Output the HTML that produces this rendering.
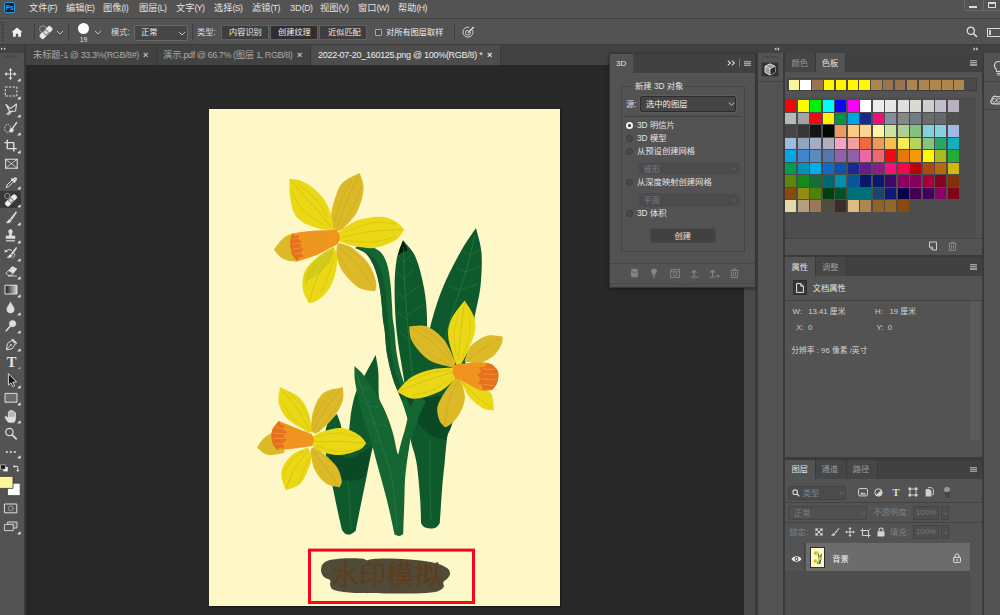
<!DOCTYPE html>
<html lang="zh-CN">
<head>
<meta charset="utf-8">
<title>Photoshop</title>
<style>
*{box-sizing:border-box;margin:0;padding:0}
html,body{width:1000px;height:615px;overflow:hidden;background:#535353}
body{position:relative;font-family:"Liberation Sans","Noto Sans CJK SC",sans-serif;font-size:9.5px;color:#d6d6d6;line-height:1}
.abs{position:absolute}
.t{position:absolute;white-space:nowrap;line-height:12px;height:12px}
/* bars */
#menubar{left:0;top:0;width:1000px;height:19px;background:#535353;border-bottom:1px solid #404040}
#optbar{left:0;top:19px;width:1000px;height:26px;background:#535353;border-bottom:1px solid #3a3a3a}
#tabbar{left:24px;top:45px;width:733px;height:20px;background:#424242}
#toolbar{left:0;top:45px;width:24px;height:570px;background:#535353}
#canvas{left:25px;top:65px;width:733px;height:550px;background:#282828}
#doc{left:209px;top:108.6px;width:351.3px;height:497.9px;background:#fef8c8;box-shadow:1px 1px 1.5px #161616}
.mi{top:1.7px;color:#e2e2e2;font-size:9.2px}
.mi i{font-style:normal;font-size:8.7px;letter-spacing:-0.5px}
.tb{top:49px;font-size:9.2px;color:#a9a9a9}
.tb i{font-style:normal;font-size:9px;letter-spacing:var(--l)}
.tx{font-size:9px;font-weight:bold;color:#c4c4c4}
.sw{width:11.3px;height:11.2px}
.pt{font-size:8.3px;color:#dcdcdc}
.pp{font-size:7.8px;color:#cdcdcd}
.ot{top:27px;font-size:8.2px;color:#dcdcdc}
</style>
</head>
<body>
<!-- canvas -->
<div class="abs" id="canvas"></div>
<div class="abs" style="left:743.7px;top:65px;width:11.5px;height:550px;background:#4a4a4a"></div>
<div class="abs" style="left:755px;top:65px;width:3px;height:550px;background:#3c3c3c"></div>
<div class="abs" id="doc"></div>
<!--ART-->
<svg class="abs" style="left:0;top:0" width="1000" height="615" viewBox="0 0 1000 615">
<path d="M476.0 228.0C473.5 231.8 466.4 241.3 461.0 251.0C455.6 260.7 448.3 274.5 443.5 286.0C438.7 297.5 434.9 309.0 432.0 320.0C429.1 331.0 427.3 338.7 426.0 352.0C424.7 365.3 423.7 385.3 424.0 400.0C424.3 414.7 427.3 433.3 428.0 440.0C431.7 438.3 443.7 443.3 450.0 430.0C456.3 416.7 463.3 371.7 466.0 360.0C467.5 352.5 472.6 327.3 475.0 315.0C477.4 302.7 479.4 296.3 480.5 286.0C481.6 275.7 482.2 262.7 481.5 253.0C480.8 243.3 476.9 232.2 476.0 228.0Z" fill="#0f5a2d"/>
<path d="M403.0 240.5C401.9 243.6 398.1 250.9 396.7 259.0C395.3 267.1 394.6 276.8 394.6 289.0C394.6 301.2 395.2 317.5 396.7 332.0C398.2 346.5 401.2 361.3 403.4 376.0C405.6 390.7 408.9 412.7 410.0 420.0C412.3 416.7 421.3 411.3 424.0 400.0C426.7 388.7 425.7 360.0 426.0 352.0C426.2 346.3 427.3 328.7 427.0 318.0C426.7 307.3 425.9 298.2 424.0 288.0C422.1 277.8 419.0 264.9 415.5 257.0C412.0 249.1 405.1 243.2 403.0 240.5Z" fill="#0f5a2d"/>
<path d="M403.0 240.5C402.4 242.1 400.2 247.6 399.5 250.0C398.8 252.4 398.7 254.2 398.5 255.0C399.2 254.5 401.5 252.8 403.0 252.0C404.5 251.2 406.8 250.8 407.5 250.5C407.2 249.6 406.2 246.7 405.5 245.0C404.8 243.3 403.4 241.2 403.0 240.5Z" fill="#06200f"/>
<path d="M404.0 372.0C404.5 378.3 405.9 398.9 407.0 410.0C408.1 421.1 408.9 429.9 410.5 438.8C412.1 447.7 415.0 453.0 416.6 463.2C418.2 473.4 419.5 489.8 420.2 499.8C420.9 509.8 420.9 519.1 421.0 523.0C421.5 523.7 422.5 526.1 424.0 527.0C425.5 527.9 428.0 528.4 430.0 528.5C432.0 528.6 434.4 528.4 436.0 527.5C437.6 526.6 439.2 523.8 439.8 523.0C440.2 517.1 441.4 497.6 442.2 487.6C443.0 477.6 443.8 471.3 444.6 463.2C445.4 455.1 445.8 447.7 447.0 438.8C448.2 429.9 450.7 417.3 452.0 410.0C453.3 402.7 457.0 401.7 455.0 395.0C453.0 388.3 442.5 374.2 440.0 370.0C436.7 368.3 426.0 359.7 420.0 360.0C414.0 360.3 406.7 370.0 404.0 372.0Z" fill="#0f5a2d"/>
<path d="M375.7 355.1C374.1 358.0 369.5 366.4 366.2 372.5C362.9 378.6 358.4 385.8 356.0 392.0C353.6 398.2 352.5 404.9 351.5 410.0C350.5 415.1 350.5 418.5 349.9 422.8C349.3 427.1 349.1 433.1 348.0 436.0C346.9 438.9 343.8 439.3 343.0 440.0C342.6 437.5 341.8 429.3 340.8 425.0C339.8 420.7 337.5 415.9 336.9 414.1C335.2 415.9 329.0 419.9 327.0 425.0C325.0 430.1 324.8 437.8 325.0 445.0C325.2 452.2 326.7 460.9 328.0 468.0C329.3 475.1 331.2 480.8 332.8 487.7C334.4 494.6 335.8 502.3 337.3 509.3C338.8 516.3 341.1 526.4 341.9 529.8C342.4 530.4 343.6 532.7 345.0 533.5C346.4 534.3 348.2 534.9 350.0 534.5C351.8 534.1 354.7 531.6 355.6 531.0C356.6 526.2 359.4 511.8 361.3 502.5C363.2 493.2 365.2 483.6 366.9 475.2C368.6 466.8 369.3 461.6 371.5 452.4C373.7 443.2 378.8 430.1 380.0 420.0C381.2 409.9 378.8 398.0 378.6 392.0C378.4 386.0 378.7 387.6 378.6 384.0C378.5 380.4 378.7 375.2 378.2 370.4C377.7 365.6 376.1 357.7 375.7 355.1Z" fill="#0f5a2d"/>
<path d="M330.0 452.0C333.3 453.0 344.7 458.0 350.0 458.0C355.3 458.0 358.3 454.0 362.0 452.0C365.7 450.0 370.3 447.0 372.0 446.0C371.5 448.7 370.3 456.7 369.0 462.0C367.7 467.3 364.8 475.3 364.0 478.0C361.7 478.5 354.3 481.2 350.0 481.0C345.7 480.8 341.2 479.2 338.0 477.0C334.8 474.8 332.3 472.2 331.0 468.0C329.7 463.8 330.2 454.7 330.0 452.0Z" fill="#0a4522" opacity="0.8"/>
<path d="M355.0 248.0C356.8 248.9 362.8 250.5 366.0 253.6C369.2 256.7 371.8 261.4 374.0 266.6C376.2 271.8 377.9 278.5 379.2 285.0C380.5 291.5 381.2 299.8 381.8 305.6C382.4 311.4 382.5 315.9 383.0 320.0C383.5 324.1 383.9 324.3 384.6 330.0C385.3 335.7 385.6 345.8 387.0 354.0C388.4 362.2 390.6 371.2 393.0 379.0C395.4 386.8 399.2 393.9 401.7 400.7C404.2 407.5 406.9 416.8 408.0 420.0C409.0 419.7 412.3 419.3 414.0 418.0C415.7 416.7 417.3 413.0 418.0 412.0C416.7 409.7 412.7 404.0 410.0 398.0C407.3 392.0 403.9 383.3 401.7 376.0C399.5 368.7 398.0 361.7 396.8 354.0C395.6 346.3 395.1 336.0 394.4 330.0C393.7 324.0 393.1 322.2 392.7 318.0C392.3 313.8 392.4 310.7 392.0 305.0C391.6 299.3 391.3 290.8 390.5 284.0C389.7 277.2 388.8 269.4 387.0 264.0C385.2 258.6 383.2 254.6 380.0 251.5C376.8 248.4 370.0 246.5 368.0 245.5C366.7 245.4 362.2 244.6 360.0 245.0C357.8 245.4 355.8 247.5 355.0 248.0Z" fill="#156532"/>
<path d="M355.0 248.0C356.8 248.9 362.8 250.5 366.0 253.6C369.2 256.7 371.8 261.4 374.0 266.6C376.2 271.8 377.9 278.5 379.2 285.0C380.5 291.5 381.2 299.8 381.8 305.6C382.4 311.4 382.5 315.9 383.0 320.0C383.5 324.1 383.9 324.3 384.6 330.0C385.3 335.7 385.6 345.8 387.0 354.0C388.4 362.2 390.6 371.2 393.0 379.0C395.4 386.8 400.2 397.1 401.7 400.7C402.1 400.4 403.4 399.7 404.0 399.0C404.6 398.3 405.2 396.9 405.5 396.5C404.1 393.2 399.3 384.1 397.0 377.0C394.7 369.9 392.8 361.8 391.5 354.0C390.2 346.2 389.7 336.0 389.0 330.0C388.3 324.0 387.9 322.2 387.5 318.0C387.1 313.8 387.0 310.5 386.5 305.0C386.0 299.5 385.6 291.2 384.5 285.0C383.4 278.8 382.1 272.8 380.0 268.0C377.9 263.2 375.0 259.1 372.0 256.0C369.0 252.9 363.7 250.6 362.0 249.5C361.3 249.2 359.2 248.2 358.0 248.0C356.8 247.8 355.5 248.0 355.0 248.0Z" fill="#0e5229" opacity="0.75"/>
<path d="M404.0 392.0C406.7 393.0 414.0 397.3 420.0 398.0C426.0 398.7 434.3 395.7 440.0 396.0C445.7 396.3 451.7 399.3 454.0 400.0C453.7 403.3 453.3 413.3 452.0 420.0C450.7 426.7 447.0 436.7 446.0 440.0C443.7 439.3 436.7 439.0 432.0 436.0C427.3 433.0 422.7 429.3 418.0 422.0C413.3 414.7 406.3 397.0 404.0 392.0Z" fill="#0a4522" opacity="0.8"/>
<path d="M354.6 366.1C356.2 367.8 360.9 371.6 364.5 376.2C368.1 380.8 372.6 387.6 376.2 393.8C379.8 400.0 383.2 406.8 386.0 413.3C388.8 419.8 391.0 426.6 392.8 432.8C394.6 439.0 395.8 446.8 396.7 450.4C397.6 454.0 398.0 453.9 398.3 454.6C398.8 452.7 400.0 446.9 401.0 443.0C402.0 439.1 403.2 435.8 404.4 431.5C405.6 427.2 406.8 421.5 408.0 417.0C409.2 412.5 410.4 408.1 411.7 404.6C413.0 401.1 415.3 397.4 416.0 396.0C417.0 396.3 420.3 397.0 422.0 398.0C423.7 399.0 425.3 401.3 426.0 402.0C425.0 403.9 422.4 407.9 420.2 413.2C418.0 418.5 414.6 429.6 413.0 433.9C411.4 438.2 410.9 438.0 410.5 438.8C409.9 442.9 407.7 456.3 406.8 463.2C405.9 470.1 405.4 473.9 405.0 480.0C404.6 486.1 404.7 490.8 404.4 499.8C404.1 508.8 403.4 528.2 403.2 533.9C402.5 534.2 400.4 535.9 399.0 536.0C397.6 536.1 395.3 534.8 394.6 534.5C393.4 529.2 390.2 513.5 387.5 502.5C384.8 491.5 381.2 478.9 378.3 468.3C375.4 457.7 372.9 446.9 370.4 438.7C367.9 430.5 365.4 425.6 363.5 419.1C361.6 412.6 360.1 406.1 358.7 399.6C357.2 393.1 355.5 385.7 354.8 380.1C354.1 374.5 354.6 368.4 354.6 366.1Z" fill="#166633"/>
<path d="M356.0 372.0C357.7 376.7 362.0 388.7 366.0 400.0C370.0 411.3 375.7 426.7 380.0 440.0C384.3 453.3 389.2 465.0 392.0 480.0C394.8 495.0 396.2 521.7 397.0 530.0" fill="none" stroke="#2c8048" stroke-width="0.6"/>
<path d="M362.0 389.0C363.3 388.8 368.7 388.2 370.0 388.0" fill="none" stroke="#2c8048" stroke-width="0.45"/>
<path d="M368.0 406.0C369.7 406.2 376.3 406.8 378.0 407.0" fill="none" stroke="#2c8048" stroke-width="0.45"/>
<path d="M374.0 423.0C376.0 423.5 384.0 425.5 386.0 426.0" fill="none" stroke="#2c8048" stroke-width="0.45"/>
<path d="M362.0 389.0C361.2 387.5 357.8 381.5 357.0 380.0" fill="none" stroke="#2c8048" stroke-width="0.45"/>
<path d="M368.0 406.0C366.7 405.0 361.3 401.0 360.0 400.0" fill="none" stroke="#2c8048" stroke-width="0.45"/>
<path d="M374.0 423.0C372.8 422.5 368.2 420.5 367.0 420.0" fill="none" stroke="#2c8048" stroke-width="0.45"/>
<path d="M381.0 443.0C380.0 442.5 376.0 440.5 375.0 440.0" fill="none" stroke="#2c8048" stroke-width="0.45"/>
<path d="M403.5 247.0C403.8 254.2 404.1 274.5 405.0 290.0C405.9 305.5 407.7 325.0 409.0 340.0C410.3 355.0 412.3 373.3 413.0 380.0" fill="none" stroke="#2c8048" stroke-width="0.6"/>
<path d="M404.0 262.0C405.2 260.8 409.8 256.2 411.0 255.0" fill="none" stroke="#2c8048" stroke-width="0.5"/>
<path d="M404.5 278.0C406.2 276.3 413.2 269.7 415.0 268.0" fill="none" stroke="#2c8048" stroke-width="0.5"/>
<path d="M405.5 296.0C407.9 294.2 417.6 286.8 420.0 285.0" fill="none" stroke="#2c8048" stroke-width="0.5"/>
<path d="M407.0 315.0C409.7 313.3 420.3 306.7 423.0 305.0" fill="none" stroke="#2c8048" stroke-width="0.5"/>
<path d="M404.0 262.0C403.2 261.0 399.8 257.0 399.0 256.0" fill="none" stroke="#2c8048" stroke-width="0.5"/>
<path d="M404.5 280.0C403.2 278.7 398.2 273.3 397.0 272.0" fill="none" stroke="#2c8048" stroke-width="0.5"/>
<path d="M405.5 300.0C404.1 298.7 398.4 293.3 397.0 292.0" fill="none" stroke="#2c8048" stroke-width="0.5"/>
<path d="M407.0 320.0C405.5 318.7 399.5 313.3 398.0 312.0" fill="none" stroke="#2c8048" stroke-width="0.5"/>
<path d="M409.0 340.0C407.5 338.7 401.5 333.3 400.0 332.0" fill="none" stroke="#2c8048" stroke-width="0.5"/>
<path d="M475.0 235.0C473.3 241.7 469.2 260.8 465.0 275.0C460.8 289.2 454.2 305.8 450.0 320.0C445.8 334.2 441.7 353.3 440.0 360.0" fill="none" stroke="#2c8048" stroke-width="0.6"/>
<path d="M470.0 255.0C471.5 254.2 477.5 250.8 479.0 250.0" fill="none" stroke="#2c8048" stroke-width="0.5"/>
<path d="M466.0 272.0C468.3 271.0 477.7 267.0 480.0 266.0" fill="none" stroke="#2c8048" stroke-width="0.5"/>
<path d="M460.0 290.0C463.0 289.0 475.0 285.0 478.0 284.0" fill="none" stroke="#2c8048" stroke-width="0.5"/>
<path d="M470.0 255.0C469.0 254.5 465.0 252.5 464.0 252.0" fill="none" stroke="#2c8048" stroke-width="0.5"/>
<path d="M466.0 272.0C464.3 271.3 457.7 268.7 456.0 268.0" fill="none" stroke="#2c8048" stroke-width="0.5"/>
<path d="M460.0 290.0C458.0 289.3 450.0 286.7 448.0 286.0" fill="none" stroke="#2c8048" stroke-width="0.5"/>
<path d="M430.0 440.0C430.0 446.7 429.8 466.7 430.0 480.0C430.2 493.3 430.8 513.3 431.0 520.0" fill="none" stroke="#2c8048" stroke-width="0.6"/>
<path d="M348.0 480.0C348.3 485.0 349.5 501.7 350.0 510.0C350.5 518.3 350.8 526.7 351.0 530.0" fill="none" stroke="#2c8048" stroke-width="0.5"/>
<path d="M273.9 249.7C275.4 247.8 279.6 241.2 283.0 238.5C286.4 235.8 289.5 234.0 294.0 233.6C298.5 233.2 307.3 235.6 310.0 236.0C310.3 238.3 312.2 246.4 312.0 250.0C311.8 253.6 309.5 256.2 309.0 257.5C306.8 258.1 300.3 261.2 296.0 261.4C291.7 261.6 286.7 260.8 283.0 258.8C279.3 256.9 275.4 251.2 273.9 249.7Z" fill="#dbb927"/>
<path d="M359.7 173.0C357.4 174.2 349.5 177.3 346.0 180.0C342.5 182.7 340.9 183.7 338.5 189.0C336.1 194.3 332.5 205.3 331.5 212.0C330.5 218.7 332.3 226.2 332.5 229.0C333.4 229.3 336.2 231.0 338.0 231.0C339.8 231.0 342.2 229.3 343.0 229.0C345.3 226.2 353.6 218.7 357.0 212.0C360.4 205.3 363.2 195.5 363.6 189.0C364.1 182.5 360.4 175.7 359.7 173.0Z" fill="#dbb927"/>
<path d="M375.3 291.3C375.4 289.8 377.1 286.6 376.0 282.0C374.9 277.4 372.6 269.6 368.8 264.0C365.0 258.4 358.0 251.9 353.2 248.4C348.4 244.9 342.2 243.9 340.0 243.0C339.5 243.5 337.6 243.8 337.0 246.0C336.4 248.2 336.4 254.3 336.3 256.0C337.4 258.6 339.1 266.6 342.8 271.8C346.5 277.0 353.0 284.1 358.4 287.4C363.8 290.6 372.5 290.6 375.3 291.3Z" fill="#dbb927"/>
<path d="M289.5 178.7C291.2 179.0 296.2 179.1 300.0 180.5C303.8 181.9 307.9 183.8 312.0 187.0C316.1 190.2 321.4 195.3 324.6 200.0C327.8 204.7 329.5 210.0 331.0 215.0C332.5 220.0 333.1 227.5 333.5 230.0C331.6 229.9 326.8 230.4 322.0 229.3C317.2 228.2 309.6 226.2 305.0 223.6C300.4 221.0 296.8 218.1 294.3 213.5C291.8 208.9 290.8 201.8 290.0 196.0C289.2 190.2 289.6 181.6 289.5 178.7Z" fill="#e9d813"/>
<path d="M404.4 229.7C402.8 228.2 399.0 223.2 394.8 221.0C390.6 218.8 385.7 216.7 379.2 216.7C372.7 216.7 362.7 218.3 355.8 221.0C348.9 223.7 340.6 231.0 337.6 233.0C337.6 233.7 337.3 235.7 337.5 237.0C337.7 238.3 338.8 240.3 339.0 241.0C341.4 241.8 347.4 244.7 353.2 245.8C359.0 247.0 367.1 248.8 374.0 247.9C380.9 247.0 389.7 243.6 394.8 240.6C399.9 237.6 402.8 231.5 404.4 229.7Z" fill="#e9d813"/>
<path d="M309.0 303.5C308.1 301.6 304.6 295.6 303.5 292.0C302.4 288.4 302.2 285.5 302.5 282.0C302.8 278.5 303.4 274.3 305.0 271.0C306.6 267.7 309.2 264.8 312.0 262.0C314.8 259.2 318.3 256.5 322.0 254.0C325.7 251.5 332.0 248.2 334.0 247.0C334.5 248.5 336.6 252.5 337.0 256.0C337.4 259.5 337.2 263.7 336.5 268.0C335.8 272.3 334.2 277.8 332.5 282.0C330.8 286.2 328.4 290.0 326.0 293.0C323.6 296.0 320.8 298.2 318.0 300.0C315.2 301.8 310.5 302.9 309.0 303.5Z" fill="#e9d813"/>
<path d="M305.0 275.0C306.1 273.2 308.8 267.5 311.6 264.0C314.4 260.5 318.3 256.8 322.0 254.0C325.7 251.2 332.0 248.2 334.0 247.0C333.3 249.5 332.7 257.5 330.0 262.0C327.3 266.5 322.2 270.7 318.0 274.0C313.8 277.3 307.2 280.7 305.0 282.0C304.9 281.3 304.5 279.2 304.5 278.0C304.5 276.8 304.9 275.5 305.0 275.0Z" fill="#b9c220" opacity="0.5"/>
<path d="M292.0 233.6C294.2 233.2 300.9 232.0 305.0 231.5C309.1 231.0 311.5 230.8 316.8 230.5C322.1 230.2 333.6 230.1 337.0 230.0C337.5 231.2 339.8 234.7 340.0 237.0C340.2 239.3 338.3 242.8 338.0 244.0C334.5 245.8 323.6 252.1 316.8 255.0C310.0 257.9 300.3 260.2 297.0 261.3C296.2 260.1 293.1 257.1 292.0 254.0C290.9 250.9 290.3 246.4 290.3 243.0C290.3 239.6 291.7 235.2 292.0 233.6Z" fill="#f0961f"/>
<path d="M292.0 233.6C292.6 234.0 294.4 235.8 295.5 236.0C296.6 236.2 297.9 234.3 298.5 235.0C299.1 235.7 298.4 239.0 299.0 240.0C299.6 241.0 301.8 240.0 302.0 241.0C302.2 242.0 300.2 244.8 300.5 246.0C300.8 247.2 303.4 247.0 303.5 248.0C303.6 249.0 301.1 250.6 301.0 252.0C300.9 253.4 303.2 255.6 303.0 256.5C302.8 257.4 300.5 256.7 299.5 257.5C298.5 258.3 297.4 260.7 297.0 261.3C296.2 260.1 293.1 257.1 292.0 254.0C290.9 250.9 290.3 246.4 290.3 243.0C290.3 239.6 291.7 235.2 292.0 233.6Z" fill="#e6701d"/>
<path d="M293.0 239.0C294.2 238.8 299.2 238.2 300.5 238.0" fill="none" stroke="#f0903a" stroke-width="1.1" stroke-linecap="round"/>
<path d="M292.3 244.0C294.0 243.8 300.8 243.2 302.5 243.0" fill="none" stroke="#f0903a" stroke-width="1.1" stroke-linecap="round"/>
<path d="M293.0 249.0C294.7 248.8 301.3 247.8 303.0 247.6" fill="none" stroke="#f0903a" stroke-width="1.1" stroke-linecap="round"/>
<path d="M295.5 254.0C296.6 253.8 300.9 252.8 302.0 252.6" fill="none" stroke="#f0903a" stroke-width="1.1" stroke-linecap="round"/>
<path d="M303.0 237.0C306.7 236.4 321.3 234.1 325.0 233.5" fill="none" stroke="#e88a1c" stroke-width="0.5"/>
<path d="M305.0 243.0C309.5 242.2 327.5 238.8 332.0 238.0" fill="none" stroke="#e88a1c" stroke-width="0.5"/>
<path d="M306.0 249.0C310.0 248.0 326.0 244.0 330.0 243.0" fill="none" stroke="#e88a1c" stroke-width="0.5"/>
<path d="M305.0 255.0C307.8 254.0 319.2 250.0 322.0 249.0" fill="none" stroke="#e88a1c" stroke-width="0.5"/>
<path d="M291.0 181.0C293.3 183.7 300.2 191.7 305.0 197.0C309.8 202.3 315.7 208.0 320.0 213.0C324.3 218.0 329.2 224.7 331.0 227.0" fill="none" stroke="#c9a81c" stroke-width="0.5"/>
<path d="M297.0 184.0C300.0 186.3 309.8 192.3 315.0 198.0C320.2 203.7 325.8 214.7 328.0 218.0" fill="none" stroke="#c9a81c" stroke-width="0.4"/>
<path d="M291.0 190.0C293.0 193.3 297.8 204.3 303.0 210.0C308.2 215.7 318.8 221.7 322.0 224.0" fill="none" stroke="#c9a81c" stroke-width="0.4"/>
<path d="M358.5 176.0C356.8 179.7 351.6 189.5 348.0 198.0C344.4 206.5 338.8 222.2 337.0 227.0" fill="none" stroke="#c79a22" stroke-width="0.5"/>
<path d="M352.0 180.0C350.2 183.3 343.9 193.0 341.0 200.0C338.1 207.0 335.6 218.3 334.5 222.0" fill="none" stroke="#c79a22" stroke-width="0.4"/>
<path d="M361.5 186.0C360.1 189.7 356.4 201.2 353.0 208.0C349.6 214.8 343.0 223.8 341.0 227.0" fill="none" stroke="#c79a22" stroke-width="0.4"/>
<path d="M402.0 229.5C397.5 229.8 385.0 229.8 375.0 231.0C365.0 232.2 347.5 236.0 342.0 237.0" fill="none" stroke="#c9a81c" stroke-width="0.5"/>
<path d="M396.0 224.0C392.0 223.8 380.5 221.7 372.0 223.0C363.5 224.3 349.5 230.5 345.0 232.0" fill="none" stroke="#c9a81c" stroke-width="0.4"/>
<path d="M396.0 237.0C392.0 237.8 380.5 241.4 372.0 242.0C363.5 242.6 349.5 240.8 345.0 240.5" fill="none" stroke="#c9a81c" stroke-width="0.4"/>
<path d="M374.0 289.0C371.7 285.5 365.7 274.8 360.0 268.0C354.3 261.2 343.3 251.3 340.0 248.0" fill="none" stroke="#c79a22" stroke-width="0.5"/>
<path d="M375.0 281.0C373.2 277.8 368.7 267.5 364.0 262.0C359.3 256.5 349.8 250.3 347.0 248.0" fill="none" stroke="#c79a22" stroke-width="0.4"/>
<path d="M364.0 287.0C361.3 284.2 352.2 275.5 348.0 270.0C343.8 264.5 340.1 256.7 338.5 254.0" fill="none" stroke="#c79a22" stroke-width="0.4"/>
<path d="M309.5 301.0C310.9 296.8 314.1 284.3 318.0 276.0C321.9 267.7 330.5 255.2 333.0 251.0" fill="none" stroke="#c9a81c" stroke-width="0.5"/>
<path d="M305.0 285.0C306.5 282.2 310.2 273.3 314.0 268.0C317.8 262.7 325.7 255.5 328.0 253.0" fill="none" stroke="#c9a81c" stroke-width="0.4"/>
<path d="M321.0 293.0C322.2 290.2 325.8 281.8 328.0 276.0C330.2 270.2 333.4 261.0 334.5 258.0" fill="none" stroke="#c9a81c" stroke-width="0.4"/>
<path d="M445.4 427.5C444.4 426.4 441.0 424.2 439.7 421.0C438.4 417.8 436.8 412.3 437.3 408.0C437.9 403.7 440.1 399.9 443.0 395.0C445.9 390.1 452.5 381.4 454.4 378.7C455.2 378.6 457.6 376.9 459.0 378.0C460.4 379.1 461.9 384.0 462.5 385.2C462.9 387.4 465.2 393.9 464.9 398.2C464.6 402.5 462.9 407.1 460.9 411.2C458.9 415.3 455.3 419.9 452.7 422.6C450.1 425.3 446.6 426.7 445.4 427.5Z" fill="#dbb927"/>
<path d="M493.8 410.5C493.7 408.8 493.6 403.1 493.0 400.0C492.4 396.9 492.5 394.5 490.0 392.0C487.5 389.5 482.5 387.3 478.0 385.0C473.5 382.7 465.5 379.2 463.0 378.0C462.6 378.3 460.9 379.3 460.5 380.0C460.1 380.7 460.5 381.7 460.5 382.0C461.0 382.8 461.6 383.8 463.3 386.5C465.0 389.2 467.2 394.8 470.6 398.5C474.0 402.2 479.7 406.5 483.6 408.5C487.5 410.5 492.1 410.2 493.8 410.5Z" fill="#e9d813"/>
<path d="M409.1 326.4C412.1 326.4 421.0 324.2 426.8 326.4C432.6 328.6 439.1 333.8 443.8 339.4C448.5 345.0 453.0 356.8 454.8 360.3C454.8 360.9 455.3 362.8 455.0 364.0C454.7 365.2 453.3 366.9 453.0 367.5C449.1 366.3 436.1 364.6 429.4 360.3C422.6 356.1 415.9 347.6 412.5 342.0C409.1 336.4 409.7 329.0 409.1 326.4Z" fill="#dbb927"/>
<path d="M502.8 336.5C500.1 336.4 492.0 334.3 486.9 335.7C481.8 337.1 475.3 342.0 472.2 344.6C469.1 347.2 469.5 348.3 468.2 351.1C466.9 353.9 465.1 359.8 464.5 361.5C466.3 361.8 472.1 363.1 475.5 363.0C478.9 362.9 481.9 362.3 485.2 360.9C488.4 359.5 492.3 357.1 495.0 354.4C497.7 351.7 500.2 347.6 501.5 344.6C502.8 341.6 502.6 337.9 502.8 336.5Z" fill="#dbb927"/>
<path d="M464.6 300.4C462.4 303.4 454.3 312.5 451.6 318.6C448.9 324.7 447.6 329.4 448.2 336.8C448.8 344.2 454.3 358.5 455.5 362.9C455.9 363.4 457.1 365.7 458.0 366.0C458.9 366.3 460.5 364.8 461.0 364.5C462.0 362.5 464.9 358.0 467.2 352.5C469.5 347.0 473.9 337.7 475.0 331.6C476.1 325.5 475.4 321.2 473.7 316.0C472.0 310.8 466.1 303.0 464.6 300.4Z" fill="#e9d813"/>
<path d="M396.9 391.5C399.3 389.1 405.3 380.9 411.2 377.2C417.1 373.5 424.8 371.0 432.0 369.4C439.2 367.8 450.5 367.8 454.2 367.5C454.6 368.2 456.3 370.2 456.5 372.0C456.7 373.8 455.7 377.4 455.5 378.5C452.9 380.7 446.8 388.1 439.8 391.5C432.9 394.9 421.0 398.8 413.8 398.8C406.6 398.8 399.7 392.7 396.9 391.5Z" fill="#e9d813"/>
<path d="M453.0 368.5C453.2 367.9 451.6 366.0 454.5 365.0C457.4 364.0 465.5 363.1 470.6 362.7C475.7 362.3 481.6 362.2 485.2 362.5C488.8 362.8 490.9 364.2 492.0 364.5C492.9 365.5 496.6 368.4 497.6 370.6C498.6 372.9 498.4 375.7 498.2 378.0C498.0 380.3 497.4 382.5 496.4 384.5C495.4 386.5 492.7 389.1 492.0 390.0C490.0 390.1 484.3 391.5 480.0 390.3C475.7 389.1 470.2 385.1 466.0 383.0C461.8 380.9 456.8 378.4 455.0 377.5C454.6 376.8 452.9 374.5 452.6 373.0C452.3 371.5 452.9 369.2 453.0 368.5Z" fill="#f0961f"/>
<path d="M492.0 364.5C492.9 365.5 496.6 368.4 497.6 370.6C498.6 372.9 498.4 375.7 498.2 378.0C498.0 380.3 497.4 382.5 496.4 384.5C495.4 386.5 492.7 389.1 492.0 390.0C491.2 389.9 488.5 389.5 487.0 389.5C485.5 389.5 483.8 390.8 483.0 390.0C482.2 389.2 482.8 386.1 482.0 385.0C481.2 383.9 478.8 384.6 478.5 383.5C478.2 382.4 480.7 379.9 480.5 378.5C480.3 377.1 477.4 376.2 477.5 375.0C477.6 373.8 480.7 372.8 481.0 371.5C481.3 370.2 478.9 367.8 479.5 367.0C480.1 366.2 483.2 367.6 484.5 367.0C485.8 366.4 485.8 363.9 487.0 363.5C488.2 363.1 491.2 364.3 492.0 364.5Z" fill="#e6701d"/>
<path d="M483.0 369.0C484.8 369.1 492.2 369.4 494.0 369.5" fill="none" stroke="#f0903a" stroke-width="1.1" stroke-linecap="round"/>
<path d="M483.0 374.0C485.2 374.1 494.2 374.4 496.5 374.5" fill="none" stroke="#f0903a" stroke-width="1.1" stroke-linecap="round"/>
<path d="M482.5 379.0C484.8 379.2 494.2 379.8 496.5 380.0" fill="none" stroke="#f0903a" stroke-width="1.1" stroke-linecap="round"/>
<path d="M484.5 384.5C486.2 384.7 492.8 385.3 494.5 385.5" fill="none" stroke="#f0903a" stroke-width="1.1" stroke-linecap="round"/>
<path d="M460.0 367.0C463.5 367.1 477.5 367.4 481.0 367.5" fill="none" stroke="#e88a1c" stroke-width="0.5"/>
<path d="M458.0 371.0C461.6 371.3 475.9 372.7 479.5 373.0" fill="none" stroke="#e88a1c" stroke-width="0.5"/>
<path d="M459.0 375.0C462.5 375.7 476.5 378.3 480.0 379.0" fill="none" stroke="#e88a1c" stroke-width="0.5"/>
<path d="M463.0 379.0C466.3 380.2 479.7 384.8 483.0 386.0" fill="none" stroke="#e88a1c" stroke-width="0.5"/>
<path d="M464.5 303.0C463.9 307.5 462.0 320.5 461.0 330.0C460.0 339.5 458.9 355.0 458.5 360.0" fill="none" stroke="#c9a81c" stroke-width="0.5"/>
<path d="M458.0 314.0C457.3 317.5 454.2 328.0 454.0 335.0C453.8 342.0 456.1 352.5 456.5 356.0" fill="none" stroke="#c9a81c" stroke-width="0.4"/>
<path d="M470.0 314.0C469.9 317.5 470.8 327.7 469.5 335.0C468.2 342.3 463.2 354.2 462.0 358.0" fill="none" stroke="#c9a81c" stroke-width="0.4"/>
<path d="M411.0 328.0C414.5 330.3 425.2 336.2 432.0 342.0C438.8 347.8 448.7 359.5 452.0 363.0" fill="none" stroke="#c79a22" stroke-width="0.5"/>
<path d="M420.0 328.0C423.0 330.0 432.6 335.0 438.0 340.0C443.4 345.0 450.1 355.0 452.5 358.0" fill="none" stroke="#c79a22" stroke-width="0.4"/>
<path d="M413.0 338.0C415.5 340.5 422.0 348.6 428.0 353.0C434.0 357.4 445.5 362.6 449.0 364.5" fill="none" stroke="#c79a22" stroke-width="0.4"/>
<path d="M501.0 338.0C497.8 339.8 487.8 345.0 482.0 349.0C476.2 353.0 468.7 359.8 466.0 362.0" fill="none" stroke="#c79a22" stroke-width="0.5"/>
<path d="M399.0 391.0C403.3 389.3 416.0 384.2 425.0 381.0C434.0 377.8 448.3 373.5 453.0 372.0" fill="none" stroke="#c9a81c" stroke-width="0.5"/>
<path d="M408.0 382.0C411.7 380.5 423.0 375.0 430.0 373.0C437.0 371.0 446.7 370.5 450.0 370.0" fill="none" stroke="#c9a81c" stroke-width="0.4"/>
<path d="M412.0 395.5C415.8 394.4 428.2 392.2 435.0 389.0C441.8 385.8 450.0 378.6 453.0 376.5" fill="none" stroke="#c9a81c" stroke-width="0.4"/>
<path d="M444.5 425.0C445.2 420.8 446.8 407.3 449.0 400.0C451.2 392.7 456.5 384.2 458.0 381.0" fill="none" stroke="#c79a22" stroke-width="0.5"/>
<path d="M492.0 408.0C489.3 406.0 481.0 400.3 476.0 396.0C471.0 391.7 464.3 384.3 462.0 382.0" fill="none" stroke="#c9a81c" stroke-width="0.5"/>
<path d="M257.1 447.4C258.2 445.8 261.0 440.7 264.0 438.0C267.0 435.3 273.2 432.2 275.0 431.0C276.5 432.5 282.5 436.4 284.0 440.0C285.5 443.6 284.2 450.8 284.2 452.9C281.4 453.2 272.1 455.7 267.6 454.8C263.1 453.9 258.9 448.6 257.1 447.4Z" fill="#dbb927"/>
<path d="M342.8 387.1C339.5 388.2 327.8 389.4 322.9 393.5C318.0 397.6 315.2 405.1 313.2 411.4C311.2 417.6 311.2 427.7 310.8 431.0C311.5 431.4 313.6 433.3 315.0 433.5C316.4 433.7 318.3 432.2 319.0 432.0C321.5 429.5 330.0 422.3 334.0 417.0C338.0 411.7 341.3 405.4 342.8 400.4C344.3 395.4 342.8 389.3 342.8 387.1Z" fill="#dbb927"/>
<path d="M339.5 487.4C339.9 486.2 342.2 483.9 341.7 480.5C341.2 477.1 339.8 471.3 336.7 466.7C333.6 462.1 326.7 456.2 322.9 452.9C319.1 449.6 315.5 448.0 314.0 447.0C313.5 447.3 311.6 448.0 311.0 449.0C310.4 450.0 310.6 452.3 310.5 453.0C311.2 455.8 312.1 464.4 314.6 469.5C317.1 474.6 321.6 480.3 325.7 483.3C329.8 486.3 337.2 486.7 339.5 487.4Z" fill="#dbb927"/>
<path d="M280.0 387.1C283.2 388.9 294.6 393.1 299.4 397.6C304.2 402.1 306.9 408.4 309.0 414.2C311.1 420.0 311.3 429.4 311.8 432.5C311.0 432.4 308.4 432.5 307.0 432.0C305.6 431.5 304.2 429.8 303.6 429.4C300.8 427.6 291.1 422.8 287.0 418.4C282.9 414.0 279.9 408.4 278.7 403.2C277.5 398.0 279.8 389.8 280.0 387.1Z" fill="#e9d813"/>
<path d="M366.3 443.2C365.1 441.8 362.8 437.4 358.8 434.9C354.8 432.4 348.2 428.6 342.2 428.0C336.2 427.4 327.9 430.0 322.9 431.5C317.9 433.0 313.8 436.1 312.0 437.0C311.9 437.8 311.4 440.5 311.5 442.0C311.6 443.5 312.2 445.3 312.4 446.0C313.7 446.9 315.6 450.0 320.1 451.5C324.6 453.0 333.1 455.3 339.5 455.1C345.9 454.9 354.3 452.1 358.8 450.1C363.3 448.1 365.1 444.4 366.3 443.2Z" fill="#e9d813"/>
<path d="M285.6 490.2C284.9 487.2 280.5 477.9 281.4 472.2C282.3 466.4 286.7 459.8 291.1 455.7C295.5 451.6 304.9 448.9 307.7 447.5C308.2 448.8 310.5 452.2 311.0 455.0C311.5 457.8 310.6 462.5 310.5 464.0C308.9 467.2 304.9 478.9 300.8 483.3C296.7 487.7 288.1 489.1 285.6 490.2Z" fill="#e9d813"/>
<path d="M278.7 421.1C281.6 422.2 290.5 425.8 296.0 428.0C301.5 430.2 309.2 433.1 311.8 434.1C312.2 435.1 314.0 438.0 314.0 440.0C314.0 442.0 312.2 445.0 311.8 446.0C309.0 446.4 300.8 447.8 295.0 448.5C289.2 449.2 280.2 449.8 277.3 450.1C276.5 448.9 273.4 446.2 272.5 443.0C271.6 439.8 271.0 434.6 272.0 431.0C273.0 427.4 277.6 422.8 278.7 421.1Z" fill="#f0961f"/>
<path d="M278.7 421.1C279.2 421.8 280.5 424.4 281.5 425.0C282.5 425.6 284.2 424.2 284.5 425.0C284.8 425.8 283.2 428.8 283.5 430.0C283.8 431.2 286.4 430.9 286.5 432.0C286.6 433.1 284.0 435.2 284.0 436.5C284.0 437.8 286.7 438.8 286.5 440.0C286.3 441.2 283.4 442.2 283.0 443.5C282.6 444.8 284.5 447.3 284.0 448.0C283.5 448.7 281.1 447.1 280.0 447.5C278.9 447.9 277.8 449.7 277.3 450.1C276.5 448.9 273.4 446.2 272.5 443.0C271.6 439.8 271.0 434.6 272.0 431.0C273.0 427.4 277.6 422.8 278.7 421.1Z" fill="#e6701d"/>
<path d="M275.5 427.5C276.7 427.7 281.3 428.3 282.5 428.5" fill="none" stroke="#f0903a" stroke-width="1.1" stroke-linecap="round"/>
<path d="M273.8 433.0C275.7 433.2 283.1 433.8 285.0 434.0" fill="none" stroke="#f0903a" stroke-width="1.1" stroke-linecap="round"/>
<path d="M274.0 438.5C275.8 438.5 283.2 438.5 285.0 438.5" fill="none" stroke="#f0903a" stroke-width="1.1" stroke-linecap="round"/>
<path d="M275.5 444.0C276.8 443.9 281.8 443.6 283.0 443.5" fill="none" stroke="#f0903a" stroke-width="1.1" stroke-linecap="round"/>
<path d="M286.0 427.0C289.3 428.2 302.7 432.8 306.0 434.0" fill="none" stroke="#e88a1c" stroke-width="0.5"/>
<path d="M287.5 434.0C291.1 434.7 305.4 437.3 309.0 438.0" fill="none" stroke="#e88a1c" stroke-width="0.5"/>
<path d="M287.0 441.0C290.7 441.2 305.3 442.2 309.0 442.5" fill="none" stroke="#e88a1c" stroke-width="0.5"/>
<path d="M285.0 446.5C287.8 446.4 299.2 446.1 302.0 446.0" fill="none" stroke="#e88a1c" stroke-width="0.5"/>
<path d="M281.5 389.5C284.1 392.6 292.3 401.2 297.0 408.0C301.7 414.8 307.4 426.3 309.5 430.0" fill="none" stroke="#c9a81c" stroke-width="0.5"/>
<path d="M288.0 392.0C290.3 394.3 298.3 400.7 302.0 406.0C305.7 411.3 308.7 421.0 310.0 424.0" fill="none" stroke="#c9a81c" stroke-width="0.4"/>
<path d="M281.0 400.0C282.7 402.7 286.8 411.2 291.0 416.0C295.2 420.8 303.5 426.8 306.0 429.0" fill="none" stroke="#c9a81c" stroke-width="0.4"/>
<path d="M341.5 389.0C338.9 392.2 330.7 401.2 326.0 408.0C321.3 414.8 315.6 426.3 313.5 430.0" fill="none" stroke="#c79a22" stroke-width="0.5"/>
<path d="M334.0 391.0C331.7 393.8 323.6 402.3 320.0 408.0C316.4 413.7 313.8 422.2 312.5 425.0" fill="none" stroke="#c79a22" stroke-width="0.4"/>
<path d="M342.0 398.0C340.2 400.8 335.2 409.5 331.0 415.0C326.8 420.5 319.3 428.3 317.0 431.0" fill="none" stroke="#c79a22" stroke-width="0.4"/>
<path d="M364.0 443.0C360.0 442.8 348.3 441.8 340.0 441.5C331.7 441.2 318.3 441.5 314.0 441.5" fill="none" stroke="#c9a81c" stroke-width="0.5"/>
<path d="M357.0 437.0C353.8 436.3 344.8 433.0 338.0 433.0C331.2 433.0 319.7 436.3 316.0 437.0" fill="none" stroke="#c9a81c" stroke-width="0.4"/>
<path d="M357.0 449.0C353.8 449.4 344.8 452.0 338.0 451.5C331.2 451.0 319.7 446.9 316.0 446.0" fill="none" stroke="#c9a81c" stroke-width="0.4"/>
<path d="M338.5 485.5C336.4 482.6 330.2 473.8 326.0 468.0C321.8 462.2 315.2 453.8 313.0 451.0" fill="none" stroke="#c79a22" stroke-width="0.5"/>
<path d="M286.5 488.0C287.9 484.7 291.3 474.2 295.0 468.0C298.7 461.8 306.2 453.4 308.5 450.5" fill="none" stroke="#c9a81c" stroke-width="0.5"/>
<path d="M283.0 474.0C284.5 471.7 288.5 463.9 292.0 460.0C295.5 456.1 302.0 452.1 304.0 450.5" fill="none" stroke="#c9a81c" stroke-width="0.4"/>
<path d="M299.0 483.0C300.0 480.5 303.2 472.3 305.0 468.0C306.8 463.7 308.8 458.8 309.5 457.0" fill="none" stroke="#c9a81c" stroke-width="0.4"/>
<path d="M322.0 565.0C322.8 564.3 323.8 562.1 327.0 561.0C330.2 559.9 335.3 559.0 341.0 558.6C346.7 558.2 356.7 558.3 361.0 558.6C365.3 558.9 365.0 560.1 367.0 560.2C369.0 560.3 369.0 559.3 373.0 559.0C377.0 558.7 384.0 558.4 391.0 558.6C398.0 558.8 407.7 559.3 415.0 560.0C422.3 560.7 429.7 561.7 435.0 563.0C440.3 564.3 444.5 566.3 447.0 568.0C449.5 569.7 449.8 571.3 450.0 573.0C450.2 574.7 449.1 576.5 448.0 578.0C446.9 579.5 444.2 580.4 443.4 582.0C442.6 583.6 444.8 585.7 443.4 587.4C442.0 589.1 439.7 591.0 435.0 592.0C430.3 593.0 423.3 593.2 415.0 593.4C406.7 593.6 395.0 593.5 385.0 593.4C375.0 593.3 363.3 593.5 355.0 593.0C346.7 592.5 339.1 591.5 335.0 590.2C330.9 588.9 331.0 587.1 330.2 585.4C329.4 583.7 331.2 581.6 330.2 580.2C329.2 578.8 325.5 578.5 324.0 577.0C322.5 575.5 321.3 573.0 321.0 571.0C320.7 569.0 321.8 566.0 322.0 565.0Z" fill="#504a38"/>
<text x="386.5" y="585.3" text-anchor="middle" font-family="Liberation Sans,Noto Sans CJK SC,sans-serif" font-size="27.5" fill="#5e3c1c">水印模拟</text>
<rect x="309.5" y="550.1" width="164" height="52.4" fill="none" stroke="#f8061c" stroke-width="3"/>
</svg>
<!--/ART-->

<!-- menubar -->
<div class="abs" id="menubar"></div>
<div class="abs" style="left:4px;top:2px;width:11.3px;height:11px;background:#0a2233;border:1px solid #2d9bd8;border-radius:2px"></div>
<div class="t" style="left:5.8px;top:2.6px;font-size:6.6px;font-weight:bold;color:#31a8ff;line-height:10px;height:10px;letter-spacing:-0.3px">Ps</div>
<div class="t mi" style="left:29px">文件<i>(F)</i></div>
<div class="t mi" style="left:66px">编辑<i>(E)</i></div>
<div class="t mi" style="left:103px">图像<i>(I)</i></div>
<div class="t mi" style="left:139px">图层<i>(L)</i></div>
<div class="t mi" style="left:176px">文字<i>(Y)</i></div>
<div class="t mi" style="left:214px">选择<i>(S)</i></div>
<div class="t mi" style="left:252px">滤镜<i>(T)</i></div>
<div class="t mi" style="left:290px">3D<i>(D)</i></div>
<div class="t mi" style="left:320px">视图<i>(V)</i></div>
<div class="t mi" style="left:358px">窗口<i>(W)</i></div>
<div class="t mi" style="left:398px">帮助<i>(H)</i></div>

<!-- options bar -->
<div class="abs" id="optbar"></div>
<div class="abs" style="left:1px;top:22px;width:3px;height:19px;background:repeating-linear-gradient(to bottom,#3d3d3d 0 1px,#535353 1px 2px)"></div>
<svg class="abs" style="left:10.5px;top:27.2px" width="12" height="10.3" viewBox="0 0 14 12"><path d="M7 0.5 L0.6 6.2 H2.4 V11.5 H5.6 V8 H8.4 V11.5 H11.6 V6.2 H13.4 Z" fill="#f2f2f2"/></svg>
<div class="abs" style="left:34px;top:23px;width:1px;height:18px;background:#3f3f3f"></div>
<svg class="abs" style="left:38px;top:24px" width="16" height="16" viewBox="0 0 16 16"><circle cx="5" cy="5.2" r="3.4" fill="none" stroke="#9e9e9e" stroke-width="0.9"/><g transform="rotate(-45 8 8.5)"><rect x="0.5" y="5.7" width="15" height="5.6" rx="1.8" fill="#e9e9e9"/><rect x="5.6" y="5.7" width="4.8" height="5.6" fill="#8c8c8c"/><rect x="6.6" y="6.9" width="2.8" height="3.2" fill="#e4e4e4"/></g></svg>
<svg class="abs" style="left:56px;top:30px" width="8" height="5" viewBox="0 0 8 5"><path d="M1 1 L4 4 L7 1" fill="none" stroke="#bcbcbc" stroke-width="1"/></svg>
<div class="abs" style="left:68px;top:23px;width:1px;height:18px;background:#3f3f3f"></div>
<div class="abs" style="left:78px;top:22.8px;width:11px;height:11px;border-radius:50%;background:#fdfdfd"></div>
<div class="t" style="left:79.7px;top:35.6px;font-size:6.8px;line-height:7px;height:7px;color:#dedede">19</div>
<svg class="abs" style="left:94px;top:30px" width="8" height="5" viewBox="0 0 8 5"><path d="M1 1 L4 4 L7 1" fill="none" stroke="#bcbcbc" stroke-width="1"/></svg>
<div class="t ot" style="left:111px">模式:</div>
<div class="abs" style="left:134px;top:25px;width:54px;height:16px;background:#464646;border:1px solid #686868;border-radius:2px"></div>
<div class="t ot" style="left:141px;color:#efefef">正常</div>
<svg class="abs" style="left:178px;top:31px" width="8" height="5" viewBox="0 0 8 5"><path d="M1 1 L4 4 L7 1" fill="none" stroke="#c4c4c4" stroke-width="1"/></svg>
<div class="abs" style="left:192px;top:23px;width:1px;height:18px;background:#3f3f3f"></div>
<div class="t ot" style="left:197px">类型:</div>
<div class="abs" style="left:221px;top:25px;width:48px;height:15px;background:#3e3e3e;border:1px solid #606060"></div>
<div class="abs" style="left:270px;top:25px;width:48px;height:15px;background:#2f2f2f;border:1px solid #606060"></div>
<div class="abs" style="left:319px;top:25px;width:48px;height:15px;background:#3e3e3e;border:1px solid #606060"></div>
<div class="t ot" style="left:229px;color:#eee">内容识别</div>
<div class="t ot" style="left:278px;color:#eee">创建纹理</div>
<div class="t ot" style="left:328px;color:#eee">近似匹配</div>
<div class="abs" style="left:375px;top:29px;width:7px;height:7px;border:1px solid #a9a9a9;border-radius:1px;background:#4a4a4a"></div>
<div class="t ot" style="left:386px;color:#eee">对所有图层取样</div>
<div class="abs" style="left:454px;top:23px;width:1px;height:18px;background:#3f3f3f"></div>
<svg class="abs" style="left:462px;top:26px" width="13" height="13" viewBox="0 0 13 13"><path d="M10.6 4.2 A5 5 0 1 1 7.3 1.3" fill="none" stroke="#cfcfcf" stroke-width="1"/><path d="M8.2 6 A2.4 2.4 0 1 1 6.2 4.3" fill="none" stroke="#cfcfcf" stroke-width="1"/><path d="M6 6.8 L11.8 1" stroke="#e2e2e2" stroke-width="1.3"/></svg>
<!-- right of options bar -->
<svg class="abs" style="left:966px;top:26px" width="12" height="12" viewBox="0 0 12 12"><circle cx="4.8" cy="4.8" r="3.6" fill="none" stroke="#e6e6e6" stroke-width="1.2"/><path d="M7.5 7.5 L11 11" stroke="#e6e6e6" stroke-width="1.5"/></svg>
<div class="abs" style="left:987px;top:28px;width:13px;height:9px;border:1px solid #dcdcdc;border-right:none;border-radius:1px 0 0 1px"></div>
<div class="abs" style="left:989px;top:30px;width:2px;height:5px;background:#cfcfcf"></div>
<!-- window buttons -->
<div class="abs" style="left:964px;top:-1px;width:40px;height:12px;border:1px solid #6a6a6a;border-radius:0 0 0 2px"></div>
<div class="abs" style="left:983px;top:0;width:1px;height:10px;background:#6a6a6a"></div>
<div class="abs" style="left:969px;top:6px;width:8px;height:2px;background:#d9d9d9"></div>
<div class="abs" style="left:988px;top:2px;width:8px;height:6px;border:1px solid #d9d9d9;border-top-width:2px"></div>

<!-- tab bar -->
<div class="abs" id="tabbar"></div>
<div class="abs" style="left:311px;top:45px;width:189px;height:20px;background:#4d4d4d"></div>
<div class="abs" style="left:156px;top:46px;width:1px;height:19px;background:#383838"></div>
<div class="abs" style="left:310px;top:46px;width:1px;height:19px;background:#383838"></div>
<div class="abs" style="left:500px;top:46px;width:1px;height:19px;background:#383838"></div>
<div class="t tb" style="left:33px;--l:-0.41px">未标题<i>-1 @ 33.3%(RGB/8#)</i></div>
<div class="t tb tx" style="left:143px">×</div>
<div class="t tb" style="left:163px;--l:-0.42px">演示<i>.pdf @ 66.7% (</i>图层<i> 1, RGB/8)</i></div>
<div class="t tb tx" style="left:297px">×</div>
<div class="t tb" style="left:318px;color:#ededed;--l:-0.28px"><i>2022-07-20_160125.png @ 100%(RGB/8) *</i></div>
<div class="t tb tx" style="left:487px;color:#e4e4e4">×</div>

<!-- toolbar -->
<div class="abs" id="toolbar"></div>
<div class="abs" style="left:0;top:45px;width:24px;height:8px;background:#424242"></div>
<div class="abs" style="left:24px;top:45px;width:2px;height:570px;background:#3a3a3a"></div>
<div class="abs" style="left:5px;top:55px;width:13px;height:3px;background:repeating-linear-gradient(to right,#444 0 1px,#535353 1px 2px)"></div>
<div class="abs" style="left:0;top:191px;width:21px;height:17px;background:#383838"></div>
<svg class="abs" style="left:0;top:0" width="26" height="615" viewBox="0 0 26 615" fill="none" stroke="#dedede" stroke-width="1.1" stroke-linecap="round" stroke-linejoin="round">
<path d="M1 47.5 L2.9 48.8 L1 50.1 Z M4 47.5 L5.9 48.8 L4 50.1 Z" fill="#d0d0d0" stroke="none"/>
<!-- move -->
<path d="M10.5 69.5 V78.5 M6 74 H15" stroke-width="1"/><path d="M10.5 68 L12.4 70.4 H8.6 Z M10.5 80 L12.4 77.6 H8.6 Z M4.5 74 L6.9 72.1 V75.9 Z M16.5 74 L14.1 72.1 V75.9 Z" fill="#dedede" stroke="none"/>
<path d="M20.1 79.1 V81 H18.2 Z" fill="#a9a9a9"/>
<!-- marquee -->
<rect x="5.3" y="87" width="11.6" height="9" stroke-dasharray="2.3 1.4" stroke-linecap="butt"/>
<path d="M20.1 97.1 V99 H18.2 Z" fill="#a9a9a9"/>
<!-- poly lasso -->
<path d="M6 104.5 L10.3 108.6 L16.5 104 L15.6 111 L9.6 111.6 Z M9.6 111.6 L6.8 114.4 M11.5 111.6 L8.6 114.6"/>
<path d="M20.1 115.1 V117 H18.2 Z" fill="#a9a9a9"/>
<!-- quick select -->
<ellipse cx="7.6" cy="128.4" rx="3.1" ry="3.9" stroke-dasharray="1.6 1.1" stroke-linecap="butt" stroke-width="0.9"/>
<path d="M10.2 131.6 C9.6 130 10.6 128.8 12 128.6 L13.2 129.8 C13 131.2 11.8 132 10.2 131.6 Z M12.6 128.2 L16.6 122.6" fill="#dedede" stroke-width="1.4"/>
<path d="M20.1 133.1 V135 H18.2 Z" fill="#a9a9a9"/>
<!-- crop -->
<path d="M7.3 139.8 V148.6 H16.8 M4.4 142.6 H13.8 V151.6" stroke-width="1.4" stroke-linecap="butt"/>
<path d="M20.1 151.1 V153 H18.2 Z" fill="#a9a9a9"/>
<!-- frame -->
<rect x="5.6" y="159.2" width="11.6" height="9"/><path d="M5.6 159.2 L17.2 168.2 M17.2 159.2 L5.6 168.2" stroke-width="0.8"/>
<!-- eyedropper -->
<path d="M6.4 187.2 L7 185 L12 180 L13.6 181.6 L8.6 186.6 Z" stroke-width="1"/><path d="M11.6 178.8 L14.8 182 M12.8 180.4 L14.6 178.4 C15.6 177.4 17 178.8 16 179.8 L14 181.6" stroke-width="1.6"/>
<path d="M20.1 187.1 V189 H18.2 Z" fill="#a9a9a9"/>
<!-- healing -->
<circle cx="7.3" cy="196" r="2.7" stroke-width="0.8" stroke="#9c9c9c"/>
<g transform="rotate(-45 11 200.4)"><rect x="4" y="197.8" width="14" height="5.2" rx="1.7" fill="#ededed" stroke="none"/><rect x="8.8" y="197.8" width="4.4" height="5.2" fill="#7d7d7d" stroke="none"/><rect x="9.8" y="198.9" width="2.4" height="3" fill="#e6e6e6" stroke="none"/></g>
<path d="M20.1 205.1 V207 H18.2 Z" fill="#a9a9a9"/>
<!-- brush -->
<path d="M15.8 212 L10.6 218.6 L11.8 219.6 L16.4 212.6 Z" fill="#dedede" stroke-width="0.8"/><path d="M10 219.4 C8.2 219.4 8 221.4 6.2 222.6 C8.6 223.4 11.2 222.4 11.2 220.4 Z" fill="#dedede" stroke-width="0.6"/>
<path d="M20.1 223.1 V225 H18.2 Z" fill="#a9a9a9"/>
<!-- stamp -->
<path d="M10.5 229.6 C12.4 229.6 13 231.4 12 232.8 C11.4 233.8 11.6 234.8 12 236 H15 V238.6 H6 V236 H9 C9.4 234.8 9.600 233.8 9 232.800 C8 231.400 8.600 229.600 10.500 229.600 Z" fill="#dedede" stroke-width="0.5"/><path d="M6 240.8 H15" stroke-width="1.2" stroke-linecap="butt"/>
<path d="M20.1 241.1 V243 H18.2 Z" fill="#a9a9a9"/>
<!-- history brush -->
<path d="M16 247.600 L11.4 253.600 L12.4 254.500 L16.600 248.200 Z" fill="#dedede" stroke-width="0.8"/><path d="M10.8 254.400 C9.200 254.400 9 256.200 7.200 257.400 C9.400 258.200 12 257.200 12 255.400 Z" fill="#dedede" stroke-width="0.6"/><path d="M5.2 251.800 C6.400 249.600 9.400 249 11.600 250.200" stroke-width="1"/><path d="M4.4 249.400 L5 252.600 L8 251.600 Z" fill="#dedede" stroke="none"/><path d="M14.6 253.800 C14.8 255.600 14 257.200 12.800 258.200" stroke-width="0.9" stroke-dasharray="1.2 1"/>
<path d="M20.1 259.1 V261 H18.2 Z" fill="#a9a9a9"/>
<!-- eraser -->
<path d="M6.2 273 L12.4 266.800 L16.600 269 L11.4 275.400 H8.4 Z"  stroke-width="1"/><path d="M12.4 266.800 L16.600 269 L13.200 273.200 L9 271 Z" fill="#dedede" stroke-width="0.6"/><path d="M8.4 276 H16.400" stroke-width="0.9"/>
<path d="M20.1 277.1 V279 H18.2 Z" fill="#a9a9a9"/>
<!-- gradient -->
<rect x="5.4" y="285.200" width="11.600" height="8.800" fill="url(#gr)" stroke-width="1"/>
<path d="M20.1 295.1 V297 H18.2 Z" fill="#a9a9a9"/>
<!-- blur -->
<path d="M10.5 302.200 C12 305 14.200 307 14.200 309.400 C14.200 311.600 12.600 313 10.500 313 C8.400 313 6.800 311.600 6.800 309.400 C6.800 307 9 305 10.500 302.200 Z" fill="#dedede" stroke-width="0.5"/>
<path d="M20.1 313.1 V315 H18.2 Z" fill="#a9a9a9"/>
<!-- dodge -->
<circle cx="12.6" cy="323.600" r="3.200" fill="#dedede" stroke-width="0.6"/><path d="M10.4 326 L6.200 330.800" stroke-width="1.5"/>
<path d="M20.1 331.1 V333 H18.2 Z" fill="#a9a9a9"/>
<!-- pen -->
<path d="M6.6 349.400 L7.400 343.600 L11.800 340.400 L15.400 343.800 L12.400 348.400 Z" stroke-width="1"/><path d="M6.600 349.400 L10.600 345.200" stroke-width="0.8"/><circle cx="11" cy="344.800" r="0.9" fill="#dedede" stroke="none"/><path d="M12.600 339.600 L16.200 343" stroke-width="1.6"/>
<path d="M20.1 349.1 V351 H18.2 Z" fill="#a9a9a9"/>
<!-- path select -->
<path d="M8.400 374 V385.200 L11 382.800 L12.800 386.600 L14.600 385.800 L12.800 382.200 L16.200 382 Z" fill="#161616" stroke="#e2e2e2" stroke-width="0.9"/>
<path d="M20.1 386.1 V388 H18.2 Z" fill="#a9a9a9"/>
<!-- rectangle -->
<rect x="5.4" y="393.400" width="11.600" height="8.800" fill="#6c6c6c" stroke-width="1"/>
<path d="M20.1 403.1 V405 H18.2 Z" fill="#a9a9a9"/>
<!-- hand -->
<g transform="translate(10.5 416) scale(1.18 1.08) translate(-9.6 -416)"><path d="M7.600 421.600 C6.600 420.400 5.600 418.600 5 417.200 C4.800 416.400 5.800 416 6.400 416.800 L7.800 418.400 V412.600 C7.800 411.600 9.200 411.600 9.200 412.600 V411.400 C9.200 410.400 10.800 410.400 10.800 411.400 V412 C10.800 411 12.400 411 12.400 412 V413 C12.400 412.200 13.800 412.200 13.800 413.200 V418 C13.800 419.600 13.400 420.600 12.800 421.600 Z" fill="#dedede" stroke-width="0.7"/>
<path d="M9.200 412.800 V416.400 M10.800 412 V416.400 M12.400 413 V416.400" stroke="#535353" stroke-width="0.5"/></g>
<path d="M20.1 421.1 V423 H18.2 Z" fill="#a9a9a9"/>
<!-- zoom -->
<circle cx="9.4" cy="432" r="3.700" stroke-width="1.2"/><path d="M12.200 434.800 L16.200 438.800" stroke-width="1.700"/>
<!-- dots -->
<circle cx="6.800" cy="452" r="1.100" fill="#dedede" stroke="none"/><circle cx="10.800" cy="452" r="1.100" fill="#dedede" stroke="none"/><circle cx="14.800" cy="452" r="1.100" fill="#dedede" stroke="none"/>
<path d="M20.1 456.1 V458 H18.2 Z" fill="#a9a9a9"/>
<!-- default / swap -->
<rect x="3.4" y="467" width="4.400" height="4.400" fill="#f2f2f2" stroke="none"/><rect x="1" y="464.800" width="4.400" height="4.400" fill="#101010" stroke="#e6e6e6" stroke-width="0.6"/>
<path d="M14.200 466.400 H17.800 V470.600" stroke-width="1"/><path d="M12.800 466.400 L14.800 464.800 V468 Z M17.800 472 L16.200 470 H19.400 Z" fill="#dedede" stroke="none"/>
<!-- bg / fg -->
<rect x="7.6" y="483.200" width="12.600" height="12.400" fill="#ffffff" stroke="#3c3c3c" stroke-width="0.8"/>
<rect x="-1" y="476.400" width="14" height="12" fill="#fdf59c" stroke="#3c3c3c" stroke-width="0.8"/>
<!-- quick mask -->
<rect x="4.800" y="504" width="12" height="8.800" stroke-width="1"/><circle cx="10.800" cy="508.400" r="2.500" stroke-width="0.8" stroke="#a8a8a8"/>
<!-- screen mode -->
<rect x="8" y="522" width="9" height="6" fill="#6a6a6a" stroke-width="0.9"/><rect x="4.800" y="524.400" width="8.400" height="6.200" fill="#535353" stroke-width="0.9"/>
<path d="M20.1 532.1 V534 H18.2 Z" fill="#a9a9a9"/>
<defs><linearGradient id="gr" x1="0" x2="1" y1="0" y2="0"><stop offset="0" stop-color="#1c1c1c"/><stop offset="1" stop-color="#d8d8d8"/></linearGradient></defs>
</svg>
<svg class="abs" style="left:5px;top:355px" width="13" height="14" viewBox="0 0 13 14"><text x="6.5" y="12" text-anchor="middle" font-family="Liberation Serif,serif" font-weight="bold" font-size="14.5" fill="#e4e4e4">T</text></svg>
<svg class="abs" style="left:17px;top:366px" width="4" height="4" viewBox="0 0 4 4"><path d="M3.3 0.7 V3 H1 Z" fill="#bdbdbd"/></svg>

<!--P3D-->
<!-- 3D panel -->
<div class="abs" style="left:608.5px;top:53px;width:148px;height:235px;background:#363636;box-shadow:0 1px 3px rgba(0,0,0,.45)"></div>
<div class="abs" style="left:610px;top:54px;width:145px;height:18.5px;background:#414141"></div>
<div class="abs" style="left:610px;top:72.5px;width:145px;height:214.5px;background:#535353"></div>
<div class="abs" style="left:610px;top:54px;width:23px;height:19px;background:#535353"></div>
<div class="t" style="left:616px;top:57.5px;font-size:8px;color:#e6e6e6">3D</div>
<svg class="abs" style="left:726.5px;top:60px" width="9" height="6" viewBox="0 0 9 6"><path d="M0.8 0.6 L3.4 3 L0.8 5.4 M4.8 0.6 L7.4 3 L4.8 5.4" fill="none" stroke="#d6d6d6" stroke-width="1.1"/></svg>
<div class="abs" style="left:739px;top:59px;width:1px;height:8px;background:#7a7a7a"></div>
<div class="abs" style="left:744px;top:60.5px;width:7px;height:5px;background:linear-gradient(#a2a2a2 0 1px,#6a6a6a 1px 2px,#a2a2a2 2px 3px,#6a6a6a 3px 4px,#a2a2a2 4px 5px)"></div>
<div class="abs" style="left:621px;top:86px;width:124px;height:165.5px;border:1px solid #464646"></div>
<div class="abs" style="left:632px;top:84px;width:53px;height:5px;background:#535353"></div>
<div class="t pt" style="left:635px;top:79.8px;color:#e0e0e0">新建 3D 对象</div>
<div class="t pt" style="left:626px;top:97.5px;color:#dcdcdc">源:</div>
<div class="abs" style="left:640.4px;top:96px;width:96px;height:15.5px;background:#454545;border:1px solid #2c2c2c;border-radius:2px;box-shadow:0 0 0 0.5px #666"></div>
<div class="t pt" style="left:646px;top:97.8px;color:#f0f0f0">选中的图层</div>
<svg class="abs" style="left:727.5px;top:102px" width="7" height="4" viewBox="0 0 7 4"><path d="M0.8 0.6 L3.5 3.2 L6.2 0.6" fill="none" stroke="#c8c8c8" stroke-width="1"/></svg>
<div class="abs" style="left:625px;top:115.5px;width:116px;height:1px;background:#404040"></div>
<div class="abs" style="left:625.5px;top:121.5px;width:7.4px;height:7.4px;border-radius:50%;background:#2a2a2a;border:2.3px solid #f2f2f2"></div>
<div class="t pt" style="left:637px;top:118.8px;color:#e4e4e4">3D 明信片</div>
<div class="abs" style="left:625.5px;top:134.5px;width:7px;height:7px;border-radius:50%;background:#4a4a4a;border:1px solid #3a3a3a"></div>
<div class="t pt" style="left:637px;top:131.8px;color:#e4e4e4">3D 模型</div>
<div class="abs" style="left:625.5px;top:147.5px;width:7px;height:7px;border-radius:50%;background:#4a4a4a;border:1px solid #3a3a3a"></div>
<div class="t pt" style="left:637px;top:144.8px;color:#e4e4e4">从预设创建网格</div>
<div class="abs" style="left:638px;top:161.8px;width:101.5px;height:13.5px;background:#4b4b4b;border:1px solid #4f4f4f;border-radius:2px"></div>
<div class="t pt" style="left:643.5px;top:162.60000000000002px;color:#737d87">锥形</div>
<svg class="abs" style="left:730px;top:166.8px" width="7" height="4" viewBox="0 0 7 4"><path d="M0.8 0.6 L3.5 3.2 L6.2 0.6" fill="none" stroke="#666" stroke-width="0.9"/></svg>
<div class="abs" style="left:625.5px;top:179px;width:7px;height:7px;border-radius:50%;background:#4a4a4a;border:1px solid #3a3a3a"></div>
<div class="t pt" style="left:637px;top:176.3px;color:#e4e4e4">从深度映射创建网格</div>
<div class="abs" style="left:638px;top:193px;width:101.5px;height:13.5px;background:#4b4b4b;border:1px solid #4f4f4f;border-radius:2px"></div>
<div class="t pt" style="left:643.5px;top:193.8px;color:#737d87">平面</div>
<svg class="abs" style="left:730px;top:198px" width="7" height="4" viewBox="0 0 7 4"><path d="M0.8 0.6 L3.5 3.2 L6.2 0.6" fill="none" stroke="#666" stroke-width="0.9"/></svg>
<div class="abs" style="left:625.5px;top:209.8px;width:7px;height:7px;border-radius:50%;background:#4a4a4a;border:1px solid #3a3a3a"></div>
<div class="t pt" style="left:637px;top:207.10000000000002px;color:#e4e4e4">3D 体积</div>
<div class="abs" style="left:649.5px;top:228px;width:66.5px;height:15px;background:#414141;border:1px solid #4a4a4a;border-radius:2px"></div>
<div class="t pt" style="left:674.5px;top:229.5px;color:#e6e6e6">创建</div>
<div class="abs" style="left:610px;top:263px;width:145px;height:1px;background:#464646"></div>
<svg class="abs" style="left:629.5px;top:268px" width="9" height="10" viewBox="0 0 9 10"><path d="M1 2 C1 0.3 8 0.3 8 2 V8 C8 9.7 1 9.7 1 8 Z" fill="#848484"/><path d="M1 3.5 C2.5 4.6 6.5 4.6 8 3.5" fill="none" stroke="#535353" stroke-width="0.7"/></svg>
<svg class="abs" style="left:650px;top:268px" width="8" height="10" viewBox="0 0 8 10"><path d="M4 0.5 C0.8 0.5 0.2 4 2.5 5.8 V7.2 H5.5 V5.8 C7.8 4 7.2 0.5 4 0.5 Z" fill="#848484"/><path d="M2.8 8.3 H5.2 M3.2 9.5 H4.8" stroke="#848484" stroke-width="0.8"/></svg>
<svg class="abs" style="left:669.5px;top:268.5px" width="10" height="9" viewBox="0 0 10 9"><rect x="0.6" y="0.6" width="8.8" height="7.8" fill="none" stroke="#848484" stroke-width="1"/><circle cx="5" cy="4.8" r="1.9" fill="none" stroke="#848484" stroke-width="0.9"/><path d="M0.6 2.3 H9.4" stroke="#848484" stroke-width="0.8"/></svg>
<svg class="abs" style="left:689.5px;top:268px" width="10" height="10" viewBox="0 0 10 10"><path d="M1 9 H9 M4 9 V4 M4 2.5 L5.8 4 H2.2 Z" stroke="#848484" stroke-width="1.1" fill="#848484"/></svg>
<svg class="abs" style="left:709px;top:268px" width="11" height="10" viewBox="0 0 11 10"><path d="M1 9 H7 M3.5 9 V4 M3.5 2.5 L5.3 4 H1.7 Z" stroke="#848484" stroke-width="1.1" fill="#848484"/><circle cx="9" cy="8" r="1.3" fill="#848484"/></svg>
<svg class="abs" style="left:730px;top:268px" width="9" height="10" viewBox="0 0 9 10"><path d="M0.5 2.5 H8.5 M3 2.5 V1 H6 V2.5 M1.5 2.5 V9.5 H7.5 V2.5 M3.5 4 V8 M5.5 4 V8" fill="none" stroke="#848484" stroke-width="0.9"/></svg>
<div class="abs" style="left:610px;top:283px;width:145px;height:1px;background:#494949"></div>
<div class="abs" style="left:676px;top:284.5px;width:13px;height:1.5px;background:repeating-linear-gradient(to right,#444 0 1px,#535353 1px 2px)"></div>
<!--/P3D-->
<!--PANELS-->
<!-- right dock -->
<div class="abs" style="left:757px;top:45px;width:243px;height:570px;background:#3a3a3a"></div>
<div class="abs" style="left:758px;top:45px;width:242px;height:8px;background:#424242"></div>
<svg class="abs" style="left:774px;top:47.2px" width="5.6" height="4" viewBox="0 0 7 5"><path d="M3 0.3 V4.7 L0.4 2.5 Z M6.4 0.3 V4.7 L3.8 2.5 Z" fill="#cfcfcf"/></svg>
<svg class="abs" style="left:973px;top:47.2px" width="5.6" height="4" viewBox="0 0 7 5"><path d="M0.6 0.3 V4.7 L3.2 2.5 Z M4 0.3 V4.7 L6.6 2.5 Z" fill="#cfcfcf"/></svg>
<div class="abs" style="left:758px;top:53px;width:25px;height:562px;background:#535353"></div>
<div class="abs" style="left:763px;top:56px;width:15px;height:2px;background:repeating-linear-gradient(to right,#444 0 1px,#535353 1px 2px)"></div>
<div class="abs" style="left:760.5px;top:62px;width:18.5px;height:15px;background:#333;border:1px solid #484848"></div>
<svg class="abs" style="left:764px;top:63px" width="12" height="13" viewBox="0 0 12 13"><path d="M6 0.8 L11 3.3 V9.3 L6 12 L1 9.3 V3.3 Z" fill="#8d9aa3" stroke="#e8e8e8" stroke-width="0.9"/><path d="M6 5.8 L11 3.3 V9.3 L6 12 Z" fill="#2a2a2a"/><path d="M1 3.3 L6 5.8 L11 3.3 M6 5.8 V12" fill="none" stroke="#e8e8e8" stroke-width="0.8"/></svg>
<div class="abs" style="left:758px;top:81px;width:25px;height:1px;background:#444"></div>
<div class="abs" style="left:984px;top:53px;width:16px;height:562px;background:#535353"></div>
<svg class="abs" style="left:991.5px;top:60px" width="12" height="18" viewBox="0 0 12 18"><path d="M6.5 1.5 C2.5 1.5 1.2 6 4 9 C4.6 9.8 4.6 10.5 4.6 11.5 H8.4 C8.4 10.5 8.4 9.8 9 9 C11.8 6 10.5 1.5 6.5 1.5 Z" fill="none" stroke="#d8d8d8" stroke-width="1.1"/><path d="M4.8 13.3 H8.2 M5.2 15 H7.8" stroke="#d8d8d8" stroke-width="1"/></svg>
<svg class="abs" style="left:989px;top:92.5px" width="14" height="12.5" viewBox="0 0 13 12"><path d="M4 10.5 C1.5 10.5 0.6 7.5 2.6 6.2 C2.6 3.5 5.5 2.2 7.4 3.8 C9.5 2.6 12.5 4 12.4 6.6 C13.5 7.8 13 10.5 11 10.5 Z" fill="none" stroke="#d8d8d8" stroke-width="1.1"/><circle cx="5" cy="7" r="1.8" fill="none" stroke="#d8d8d8" stroke-width="0.8"/><circle cx="9" cy="7" r="1.8" fill="none" stroke="#d8d8d8" stroke-width="0.8"/></svg>
<div class="abs" style="left:984px;top:80.5px;width:16px;height:1px;background:#444"></div><div class="abs" style="left:984px;top:109px;width:16px;height:1px;background:#444"></div>
<div class="abs" style="left:785px;top:53px;width:197.3px;height:19px;background:#414141"></div>
<div class="abs" style="left:785px;top:72px;width:197.3px;height:182.6px;background:#535353"></div>
<div class="abs" style="left:785px;top:53px;width:30px;height:19px;background:#464646"></div>
<div class="t pt" style="left:791.5px;top:56.5px;color:#9a9a9a">颜色</div>
<div class="abs" style="left:815px;top:53px;width:30px;height:19.5px;background:#535353"></div>
<div class="t pt" style="left:821.7px;top:56.75px;color:#e2e2e2">色板</div>
<div class="abs" style="left:815px;top:53px;width:1px;height:19px;background:#3a3a3a"></div><div class="abs" style="left:845px;top:53px;width:1px;height:19px;background:#3a3a3a"></div>
<div class="abs" style="left:970px;top:60px;width:7.4px;height:5.6px;background:linear-gradient(#9a9e9a 0 1.2px,#676767 1.2px 2.2px,#9a9e9a 2.2px 3.4px,#676767 3.4px 4.4px,#9a9e9a 4.4px 5.6px)"></div>
<div class="abs" style="left:786.6px;top:78px;width:190px;height:13.2px;background:#4a4a4a;border:1px solid #3e3e3e;border-radius:1px"></div>
<div class="abs" style="left:788.6px;top:80px;width:10.4px;height:10.2px;background:#fdf59e"></div>
<div class="abs" style="left:800.41px;top:80px;width:10.4px;height:10.2px;background:#ffffff"></div>
<div class="abs" style="left:812.22px;top:80px;width:10.4px;height:10.2px;background:#9c7350"></div>
<div class="abs" style="left:824.03px;top:80px;width:10.4px;height:10.2px;background:#fff800"></div>
<div class="abs" style="left:835.84px;top:80px;width:10.4px;height:10.2px;background:#fff800"></div>
<div class="abs" style="left:847.65px;top:80px;width:10.4px;height:10.2px;background:#fff800"></div>
<div class="abs" style="left:859.46px;top:80px;width:10.4px;height:10.2px;background:#fff800"></div>
<div class="abs" style="left:871.27px;top:80px;width:10.4px;height:10.2px;background:#ae8450"></div>
<div class="abs" style="left:883.08px;top:80px;width:10.4px;height:10.2px;background:#9c7350"></div>
<div class="abs" style="left:894.89px;top:80px;width:10.4px;height:10.2px;background:#9c7350"></div>
<div class="abs" style="left:906.7px;top:80px;width:10.4px;height:10.2px;background:#ad864f"></div>
<div class="abs" style="left:918.51px;top:80px;width:10.4px;height:10.2px;background:#ad864f"></div>
<div class="abs" style="left:930.32px;top:80px;width:10.4px;height:10.2px;background:#ad864f"></div>
<div class="abs" style="left:942.13px;top:80px;width:10.4px;height:10.2px;background:#ad864f"></div>
<div class="abs" style="left:953.94px;top:80px;width:10.4px;height:10.2px;background:#ad864f"></div>
<div class="abs" style="left:785px;top:97px;width:191px;height:140.5px;background:#4d4d4d"></div>
<div class="abs sw" style="left:785.2px;top:100.4px;background:#f1050b"></div>
<div class="abs sw" style="left:797.7px;top:100.4px;background:#fff800"></div>
<div class="abs sw" style="left:810.2px;top:100.4px;background:#00f00a"></div>
<div class="abs sw" style="left:822.7px;top:100.4px;background:#00fbfb"></div>
<div class="abs sw" style="left:835.2px;top:100.4px;background:#0a05f5"></div>
<div class="abs sw" style="left:847.7px;top:100.4px;background:#f803f2"></div>
<div class="abs sw" style="left:860.2px;top:100.4px;background:#ffffff"></div>
<div class="abs sw" style="left:872.7px;top:100.4px;background:#ececec"></div>
<div class="abs sw" style="left:885.2px;top:100.4px;background:#e4e6ea"></div>
<div class="abs sw" style="left:897.7px;top:100.4px;background:#dfdfe1"></div>
<div class="abs sw" style="left:910.2px;top:100.4px;background:#d9dbd3"></div>
<div class="abs sw" style="left:922.7px;top:100.4px;background:#cfcfcf"></div>
<div class="abs sw" style="left:935.2px;top:100.4px;background:#bdc0c8"></div>
<div class="abs sw" style="left:947.7px;top:100.4px;background:#b9b0bd"></div>
<div class="abs sw" style="left:785.2px;top:112.9px;background:#b4bab8"></div>
<div class="abs sw" style="left:797.7px;top:112.9px;background:#a1a3a7"></div>
<div class="abs sw" style="left:810.2px;top:112.9px;background:#ee0a10"></div>
<div class="abs sw" style="left:822.7px;top:112.9px;background:#fff200"></div>
<div class="abs sw" style="left:835.2px;top:112.9px;background:#029346"></div>
<div class="abs sw" style="left:847.7px;top:112.9px;background:#00a5e6"></div>
<div class="abs sw" style="left:860.2px;top:112.9px;background:#1a2a8a"></div>
<div class="abs sw" style="left:872.7px;top:112.9px;background:#f00e7a"></div>
<div class="abs sw" style="left:885.2px;top:112.9px;background:#848e9a"></div>
<div class="abs sw" style="left:897.7px;top:112.9px;background:#858887"></div>
<div class="abs sw" style="left:910.2px;top:112.9px;background:#6f7d89"></div>
<div class="abs sw" style="left:922.7px;top:112.9px;background:#6b6b6b"></div>
<div class="abs sw" style="left:935.2px;top:112.9px;background:#64686f"></div>
<div class="abs sw" style="left:947.7px;top:112.9px;background:#515151"></div>
<div class="abs sw" style="left:785.2px;top:125.4px;background:#454545"></div>
<div class="abs sw" style="left:797.7px;top:125.4px;background:#363636"></div>
<div class="abs sw" style="left:810.2px;top:125.4px;background:#151515"></div>
<div class="abs sw" style="left:822.7px;top:125.4px;background:#030803"></div>
<div class="abs sw" style="left:835.2px;top:125.4px;background:#e89c60"></div>
<div class="abs sw" style="left:847.7px;top:125.4px;background:#f9c985"></div>
<div class="abs sw" style="left:860.2px;top:125.4px;background:#fad596"></div>
<div class="abs sw" style="left:872.7px;top:125.4px;background:#fdf5a2"></div>
<div class="abs sw" style="left:885.2px;top:125.4px;background:#cce39d"></div>
<div class="abs sw" style="left:897.7px;top:125.4px;background:#aed192"></div>
<div class="abs sw" style="left:910.2px;top:125.4px;background:#84c080"></div>
<div class="abs sw" style="left:922.7px;top:125.4px;background:#83d0de"></div>
<div class="abs sw" style="left:935.2px;top:125.4px;background:#86d0e0"></div>
<div class="abs sw" style="left:947.7px;top:125.4px;background:#9dbbe0"></div>
<div class="abs sw" style="left:785.2px;top:137.9px;background:#9cbde0"></div>
<div class="abs sw" style="left:797.7px;top:137.9px;background:#92a4bf"></div>
<div class="abs sw" style="left:810.2px;top:137.9px;background:#a5adc0"></div>
<div class="abs sw" style="left:822.7px;top:137.9px;background:#b4aebd"></div>
<div class="abs sw" style="left:835.2px;top:137.9px;background:#f4a4c8"></div>
<div class="abs sw" style="left:847.7px;top:137.9px;background:#f29fa2"></div>
<div class="abs sw" style="left:860.2px;top:137.9px;background:#f06a3f"></div>
<div class="abs sw" style="left:872.7px;top:137.9px;background:#ee9a5c"></div>
<div class="abs sw" style="left:885.2px;top:137.9px;background:#f5c04a"></div>
<div class="abs sw" style="left:897.7px;top:137.9px;background:#f8ec52"></div>
<div class="abs sw" style="left:910.2px;top:137.9px;background:#b8d45c"></div>
<div class="abs sw" style="left:922.7px;top:137.9px;background:#86c484"></div>
<div class="abs sw" style="left:935.2px;top:137.9px;background:#24a86a"></div>
<div class="abs sw" style="left:947.7px;top:137.9px;background:#14b0bc"></div>
<div class="abs sw" style="left:785.2px;top:150.4px;background:#00a8e8"></div>
<div class="abs sw" style="left:797.7px;top:150.4px;background:#3f86cf"></div>
<div class="abs sw" style="left:810.2px;top:150.4px;background:#5b8cbe"></div>
<div class="abs sw" style="left:822.7px;top:150.4px;background:#5178ae"></div>
<div class="abs sw" style="left:835.2px;top:150.4px;background:#9160a8"></div>
<div class="abs sw" style="left:847.7px;top:150.4px;background:#9260a6"></div>
<div class="abs sw" style="left:860.2px;top:150.4px;background:#ee68a8"></div>
<div class="abs sw" style="left:872.7px;top:150.4px;background:#ee6870"></div>
<div class="abs sw" style="left:885.2px;top:150.4px;background:#ee0a10"></div>
<div class="abs sw" style="left:897.7px;top:150.4px;background:#e8780e"></div>
<div class="abs sw" style="left:910.2px;top:150.4px;background:#f49a06"></div>
<div class="abs sw" style="left:922.7px;top:150.4px;background:#fff800"></div>
<div class="abs sw" style="left:935.2px;top:150.4px;background:#aabb22"></div>
<div class="abs sw" style="left:947.7px;top:150.4px;background:#22ac38"></div>
<div class="abs sw" style="left:785.2px;top:162.9px;background:#009e4e"></div>
<div class="abs sw" style="left:797.7px;top:162.9px;background:#0093b3"></div>
<div class="abs sw" style="left:810.2px;top:162.9px;background:#00aeef"></div>
<div class="abs sw" style="left:822.7px;top:162.9px;background:#0a6ccc"></div>
<div class="abs sw" style="left:835.2px;top:162.9px;background:#0a54ac"></div>
<div class="abs sw" style="left:847.7px;top:162.9px;background:#1c2a90"></div>
<div class="abs sw" style="left:860.2px;top:162.9px;background:#651d8b"></div>
<div class="abs sw" style="left:872.7px;top:162.9px;background:#8e1a8c"></div>
<div class="abs sw" style="left:885.2px;top:162.9px;background:#f4127c"></div>
<div class="abs sw" style="left:897.7px;top:162.9px;background:#f00850"></div>
<div class="abs sw" style="left:910.2px;top:162.9px;background:#b80404"></div>
<div class="abs sw" style="left:922.7px;top:162.9px;background:#b04a0a"></div>
<div class="abs sw" style="left:935.2px;top:162.9px;background:#b8680e"></div>
<div class="abs sw" style="left:947.7px;top:162.9px;background:#d0b80c"></div>
<div class="abs sw" style="left:785.2px;top:175.4px;background:#5a860c"></div>
<div class="abs sw" style="left:797.7px;top:175.4px;background:#128a1c"></div>
<div class="abs sw" style="left:810.2px;top:175.4px;background:#186c36"></div>
<div class="abs sw" style="left:822.7px;top:175.4px;background:#006870"></div>
<div class="abs sw" style="left:835.2px;top:175.4px;background:#0090ac"></div>
<div class="abs sw" style="left:847.7px;top:175.4px;background:#0a5498"></div>
<div class="abs sw" style="left:860.2px;top:175.4px;background:#06186c"></div>
<div class="abs sw" style="left:872.7px;top:175.4px;background:#0a1a6c"></div>
<div class="abs sw" style="left:885.2px;top:175.4px;background:#3c0a6c"></div>
<div class="abs sw" style="left:897.7px;top:175.4px;background:#880060"></div>
<div class="abs sw" style="left:910.2px;top:175.4px;background:#86005c"></div>
<div class="abs sw" style="left:922.7px;top:175.4px;background:#a8003c"></div>
<div class="abs sw" style="left:935.2px;top:175.4px;background:#86041c"></div>
<div class="abs sw" style="left:947.7px;top:175.4px;background:#84300c"></div>
<div class="abs sw" style="left:785.2px;top:187.9px;background:#8a4a0c"></div>
<div class="abs sw" style="left:797.7px;top:187.9px;background:#948a14"></div>
<div class="abs sw" style="left:810.2px;top:187.9px;background:#4e820c"></div>
<div class="abs sw" style="left:822.7px;top:187.9px;background:#00400e"></div>
<div class="abs sw" style="left:835.2px;top:187.9px;background:#005420"></div>
<div class="abs sw" style="left:847.7px;top:187.9px;background:#00707a"></div>
<div class="abs sw" style="left:860.2px;top:187.9px;background:#007078"></div>
<div class="abs sw" style="left:872.7px;top:187.9px;background:#1c4470"></div>
<div class="abs sw" style="left:885.2px;top:187.9px;background:#0a1c78"></div>
<div class="abs sw" style="left:897.7px;top:187.9px;background:#04004e"></div>
<div class="abs sw" style="left:910.2px;top:187.9px;background:#42004e"></div>
<div class="abs sw" style="left:922.7px;top:187.9px;background:#42005a"></div>
<div class="abs sw" style="left:935.2px;top:187.9px;background:#8a0064"></div>
<div class="abs sw" style="left:947.7px;top:187.9px;background:#80041a"></div>
<div class="abs sw" style="left:785.2px;top:200.4px;background:#e6d8a8"></div>
<div class="abs sw" style="left:797.7px;top:200.4px;background:#b49e84"></div>
<div class="abs sw" style="left:810.2px;top:200.4px;background:#9c7858"></div>
<div class="abs sw" style="left:822.7px;top:200.4px;background:#504e3a"></div>
<div class="abs sw" style="left:835.2px;top:200.4px;background:#3e2c28"></div>
<div class="abs sw" style="left:847.7px;top:200.4px;background:#dcbc80"></div>
<div class="abs sw" style="left:860.2px;top:200.4px;background:#ac8850"></div>
<div class="abs sw" style="left:872.7px;top:200.4px;background:#8e6428"></div>
<div class="abs sw" style="left:885.2px;top:200.4px;background:#94682a"></div>
<div class="abs sw" style="left:897.7px;top:200.4px;background:#8a4c0e"></div>
<div class="abs" style="left:785px;top:237.5px;width:197px;height:1px;background:#464646"></div>
<svg class="abs" style="left:928px;top:241px" width="10" height="10" viewBox="0 0 10 10"><path d="M1.5 1 H8.5 V9 H4.5 L1.5 6 Z" fill="none" stroke="#cfcfcf" stroke-width="1"/><path d="M1.5 6 H4.5 V9" fill="none" stroke="#cfcfcf" stroke-width="0.9"/></svg>
<svg class="abs" style="left:948px;top:241px" width="9" height="10" viewBox="0 0 9 10"><path d="M0.5 2.5 H8.5 M3 2.5 V1 H6 V2.5 M1.5 2.5 V9.5 H7.5 V2.5 M3.5 4 V8 M5.5 4 V8" fill="none" stroke="#8c8c8c" stroke-width="0.9"/></svg>
<div class="abs" style="left:785px;top:257px;width:197.3px;height:19px;background:#414141"></div>
<div class="abs" style="left:785px;top:276px;width:197.3px;height:180.5px;background:#535353"></div>
<div class="abs" style="left:785px;top:257px;width:30px;height:19.5px;background:#535353"></div>
<div class="t pt" style="left:791.5px;top:260.75px;color:#e2e2e2">属性</div>
<div class="abs" style="left:816px;top:257px;width:30px;height:19px;background:#464646"></div>
<div class="t pt" style="left:822px;top:260.5px;color:#9a9a9a">调整</div>
<div class="abs" style="left:815px;top:257px;width:1px;height:19px;background:#3a3a3a"></div><div class="abs" style="left:846px;top:257px;width:1px;height:19px;background:#3a3a3a"></div>
<div class="abs" style="left:970px;top:264px;width:7.4px;height:5.6px;background:linear-gradient(#9a9e9a 0 1.2px,#676767 1.2px 2.2px,#9a9e9a 2.2px 3.4px,#676767 3.4px 4.4px,#9a9e9a 4.4px 5.6px)"></div>
<div class="abs" style="left:793px;top:280px;width:14px;height:15px;background:#383838;border:1px solid #2f2f2f"></div>
<svg class="abs" style="left:796px;top:282.5px" width="8" height="10" viewBox="0 0 8 10"><path d="M0.6 0.6 H4.8 L7.4 3.2 V9.4 H0.6 Z M4.8 0.6 V3.2 H7.4" fill="none" stroke="#e8e8e8" stroke-width="1"/></svg>
<div class="t pt" style="left:812.7px;top:282.2px;color:#e4e4e4">文档属性</div>
<div class="abs" style="left:785px;top:299.5px;width:197px;height:1px;background:#444"></div>
<div class="t pp" style="left:792.5px;top:306px">W:</div><div class="t pp" style="left:808.2px;top:306px;color:#d0d0d0">13.41 厘米</div>
<div class="t pp" style="left:875px;top:306px">H:</div><div class="t pp" style="left:889.5px;top:306px;color:#d0d0d0">19 厘米</div>
<div class="t pp" style="left:796.3px;top:321.5px">X:&nbsp; 0</div><div class="t pp" style="left:876.5px;top:321.5px">Y:&nbsp; 0</div>
<div class="t pp" style="left:791.2px;top:345.4px;color:#d0d0d0">分辨率 : 96 像素 /英寸</div>
<div class="abs" style="left:970.3px;top:301px;width:10px;height:138.5px;background:#5b5b5b"></div>
<div class="abs" style="left:785px;top:459.5px;width:197.3px;height:19px;background:#414141"></div>
<div class="abs" style="left:785px;top:478.5px;width:197.3px;height:136.5px;background:#535353"></div>
<div class="abs" style="left:785px;top:459.5px;width:30px;height:19.5px;background:#535353"></div>
<div class="t pt" style="left:791.5px;top:463.25px;color:#e2e2e2">图层</div>
<div class="abs" style="left:816px;top:459.5px;width:30px;height:19px;background:#464646"></div>
<div class="t pt" style="left:821.5px;top:463px;color:#9a9a9a">通道</div>
<div class="abs" style="left:847px;top:459.5px;width:30.4px;height:19px;background:#464646"></div>
<div class="t pt" style="left:852.7px;top:463px;color:#9a9a9a">路径</div>
<div class="abs" style="left:815px;top:459.5px;width:1px;height:19px;background:#3a3a3a"></div><div class="abs" style="left:846px;top:459.5px;width:1px;height:19px;background:#3a3a3a"></div><div class="abs" style="left:877.4px;top:459.5px;width:1px;height:19px;background:#3a3a3a"></div>
<div class="abs" style="left:970px;top:466.5px;width:7.4px;height:5.6px;background:linear-gradient(#9a9e9a 0 1.2px,#676767 1.2px 2.2px,#9a9e9a 2.2px 3.4px,#676767 3.4px 4.4px,#9a9e9a 4.4px 5.6px)"></div>
<div class="abs" style="left:788.2px;top:485.7px;width:58px;height:14px;background:#4b4b4b;border:1px solid #434343;border-radius:2px"></div>
<svg class="abs" style="left:792px;top:489px" width="8" height="8" viewBox="0 0 8 8"><circle cx="3.2" cy="3.2" r="2.3" fill="none" stroke="#d6d6d6" stroke-width="1.1"/><path d="M5 5 L7.4 7.4" stroke="#d6d6d6" stroke-width="1.3"/></svg>
<div class="t pt" style="left:802.7px;top:486.5px;color:#78828c">类型</div>
<svg class="abs" style="left:838.5px;top:491px" width="7" height="4" viewBox="0 0 7 4"><path d="M0.8 0.6 L3.5 3.2 L6.2 0.6" fill="none" stroke="#6e6e6e" stroke-width="0.9"/></svg>
<svg class="abs" style="left:857.5px;top:487.5px" width="10" height="9" viewBox="0 0 10 9"><rect x="0.6" y="0.6" width="8.8" height="7.3" rx="1" fill="none" stroke="#d4d4d4" stroke-width="1"/><path d="M2 6.5 L4 4 L5.5 5.5 L6.5 4.8 L8 6.5 Z" fill="#d4d4d4"/></svg>
<svg class="abs" style="left:874.2px;top:487.5px" width="9" height="9" viewBox="0 0 9 9"><circle cx="4.5" cy="4.5" r="3.7" fill="none" stroke="#d4d4d4" stroke-width="1"/><path d="M7.1 1.9 A3.7 3.7 0 0 1 1.9 7.1 Z" fill="#d4d4d4"/></svg>
<svg class="abs" style="left:891px;top:486px" width="10" height="12" viewBox="0 0 10 12"><text x="5" y="10" text-anchor="middle" font-family="Liberation Serif,serif" font-weight="bold" font-size="11" fill="#d8d8d8">T</text></svg>
<svg class="abs" style="left:907.5px;top:487px" width="10" height="10" viewBox="0 0 10 10"><rect x="2" y="2" width="6" height="6" fill="none" stroke="#d4d4d4" stroke-width="0.9"/><path d="M0.5 0.5 H3 V3 H0.5 Z M7 0.5 H9.5 V3 H7 Z M0.5 7 H3 V9.5 H0.5 Z M7 7 H9.5 V9.5 H7 Z" fill="#d4d4d4"/></svg>
<svg class="abs" style="left:925px;top:487px" width="9" height="10" viewBox="0 0 9 10"><path d="M0.6 2 H4.5 L6.5 4 V9.4 H0.6 Z" fill="#cfcfcf"/><path d="M3 0.6 H6.5 L8.4 2.5 V7.5 H7.2" fill="none" stroke="#cfcfcf" stroke-width="0.9"/></svg>
<div class="abs" style="left:944.5px;top:489.5px;width:5px;height:8px;border-radius:2px;background:#454545"></div><div class="abs" style="left:944.2px;top:486.5px;width:5.6px;height:5.6px;border-radius:50%;background:#8c98a2"></div>
<div class="abs" style="left:785px;top:501.8px;width:197px;height:1px;background:#444"></div>
<div class="abs" style="left:788.2px;top:505.6px;width:79px;height:14.2px;background:#505050;border:1px solid #454545;border-radius:2px"></div>
<div class="t pt" style="left:794px;top:506.8px;color:#78828c">正常</div>
<svg class="abs" style="left:859.5px;top:511.5px" width="7" height="4" viewBox="0 0 7 4"><path d="M0.8 0.6 L3.5 3.2 L6.2 0.6" fill="none" stroke="#6e6e6e" stroke-width="0.9"/></svg>
<div class="t pt" style="left:873.3px;top:506.3px;color:#78828c">不透明度:</div>
<div class="abs" style="left:913px;top:505.6px;width:25.5px;height:14.2px;background:#4e4e4e;border:1px solid #454545"></div><div class="t pp" style="left:916px;top:506.8px;color:#707a84">100%</div>
<div class="abs" style="left:941px;top:505.6px;width:8px;height:14.2px;background:#4e4e4e;border:1px solid #454545"></div><svg class="abs" style="left:942.5px;top:511.5px" width="5" height="3" viewBox="0 0 5 3"><path d="M0.5 0.4 L2.5 2.5 L4.5 0.4" fill="none" stroke="#6e6e6e" stroke-width="0.8"/></svg>
<div class="abs" style="left:785px;top:522px;width:197px;height:1px;background:#444"></div>
<div class="t pt" style="left:789.3px;top:525.9px;color:#78828c">锁定:</div>
<svg class="abs" style="left:815px;top:528px" width="8" height="8" viewBox="0 0 8 8"><rect x="0.4" y="0.4" width="7.2" height="7.2" fill="#d8d8d8"/><path d="M2.8 0.4 H5.2 V2.8 H7.6 V5.2 H5.2 V7.6 H2.8 V5.2 H0.4 V2.8 H2.8 Z" fill="#555" opacity="0"/><rect x="0.4" y="2.8" width="2.4" height="2.4" fill="#505050"/><rect x="2.8" y="0.4" width="2.4" height="2.4" fill="#505050"/><rect x="5.2" y="2.8" width="2.4" height="2.4" fill="#505050"/><rect x="2.8" y="5.2" width="2.4" height="2.4" fill="#505050"/></svg>
<svg class="abs" style="left:829.5px;top:527px" width="10" height="10" viewBox="0 0 10 10"><path d="M9 0.8 L4.6 5.6 L5.6 6.5 L9.5 1.3 Z" fill="#d4d4d4"/><path d="M4.2 6 C2.8 6 2.6 7.5 1 8.6 C3 9.3 5.2 8.4 5.2 6.9 Z" fill="#d4d4d4"/></svg>
<svg class="abs" style="left:844.5px;top:527px" width="10" height="10" viewBox="0 0 10 10"><path d="M5 1.5 V8.5 M1.5 5 H8.5" stroke="#d4d4d4" stroke-width="1"/><path d="M5 0 L6.6 2 H3.4 Z M5 10 L6.6 8 H3.4 Z M0 5 L2 3.4 V6.6 Z M10 5 L8 3.4 V6.6 Z" fill="#d4d4d4"/></svg>
<svg class="abs" style="left:860px;top:527.5px" width="11" height="10" viewBox="0 0 11 10"><path d="M2.5 0.5 V7.5 H10.5 M0.5 2.5 H8.5 V9.5" fill="none" stroke="#d4d4d4" stroke-width="1"/><path d="M8.5 2.5 L10.5 0.5" stroke="#d4d4d4" stroke-width="0.8"/></svg>
<svg class="abs" style="left:876.5px;top:527px" width="8" height="10" viewBox="0 0 8 10"><rect x="0.5" y="4.3" width="7" height="5.2" rx="0.8" fill="#d4d4d4"/><path d="M2 4.3 V2.8 C2 0.3 6 0.3 6 2.8 V4.3" fill="none" stroke="#d4d4d4" stroke-width="1.1"/></svg>
<div class="t pt" style="left:890px;top:525.9px;color:#78828c">填充:</div>
<div class="abs" style="left:913px;top:524.8px;width:25.5px;height:14.2px;background:#4e4e4e;border:1px solid #454545"></div><div class="t pp" style="left:916px;top:526px;color:#707a84">100%</div>
<div class="abs" style="left:941px;top:524.8px;width:8px;height:14.2px;background:#4e4e4e;border:1px solid #454545"></div><svg class="abs" style="left:942.5px;top:530.5px" width="5" height="3" viewBox="0 0 5 3"><path d="M0.5 0.4 L2.5 2.5 L4.5 0.4" fill="none" stroke="#6e6e6e" stroke-width="0.8"/></svg>
<div class="abs" style="left:785px;top:543.4px;width:185px;height:71.6px;background:#4d4d4d"></div>
<div class="abs" style="left:805.7px;top:543.4px;width:164.3px;height:27.4px;background:#6c6c6c"></div>
<div class="abs" style="left:785px;top:543.4px;width:20px;height:27.4px;background:#535353;border-right:1px solid #444"></div>
<svg class="abs" style="left:790.5px;top:554.5px" width="11" height="8" viewBox="0 0 11 8"><path d="M0.5 4 C2.5 0.3 8.5 0.3 10.5 4 C8.5 7.7 2.5 7.7 0.5 4 Z" fill="#f0f0f0"/><circle cx="5.5" cy="4" r="1.9" fill="#444"/><circle cx="5.5" cy="4" r="0.9" fill="#f0f0f0"/></svg>
<div class="abs" style="left:809.5px;top:547px;width:15px;height:21px;background:#fef8c8;border:1px solid #2e2e2e"></div>
<svg class="abs" style="left:810.5px;top:548px" width="13" height="19" viewBox="0 0 13 19"><path d="M7 4 L8.5 8 L6 16 H8 L9 8 L11 5 L9.5 16 H7.5" fill="#176b37"/><circle cx="5" cy="5" r="2" fill="#e4c81c"/><circle cx="9" cy="10.5" r="1.8" fill="#e4c81c"/><circle cx="4.5" cy="13" r="1.8" fill="#e4c81c"/><circle cx="4.2" cy="5.5" r="0.8" fill="#ee8a1c"/><circle cx="9.8" cy="10.8" r="0.8" fill="#ee8a1c"/><circle cx="3.8" cy="13" r="0.8" fill="#ee8a1c"/></svg>
<div class="t pt" style="left:832.3px;top:552.8px;color:#f2f2f2">背景</div>
<svg class="abs" style="left:952.5px;top:553px" width="8" height="10" viewBox="0 0 8 10"><rect x="0.6" y="4.3" width="6.8" height="5.1" rx="0.6" fill="none" stroke="#e4e4e4" stroke-width="1"/><path d="M2 4.3 V2.8 C2 0.4 6 0.4 6 2.8 V4.3" fill="none" stroke="#e4e4e4" stroke-width="1"/><rect x="3.5" y="6" width="1" height="2" fill="#e4e4e4"/></svg>
<!--/PANELS-->
</body>
</html>
